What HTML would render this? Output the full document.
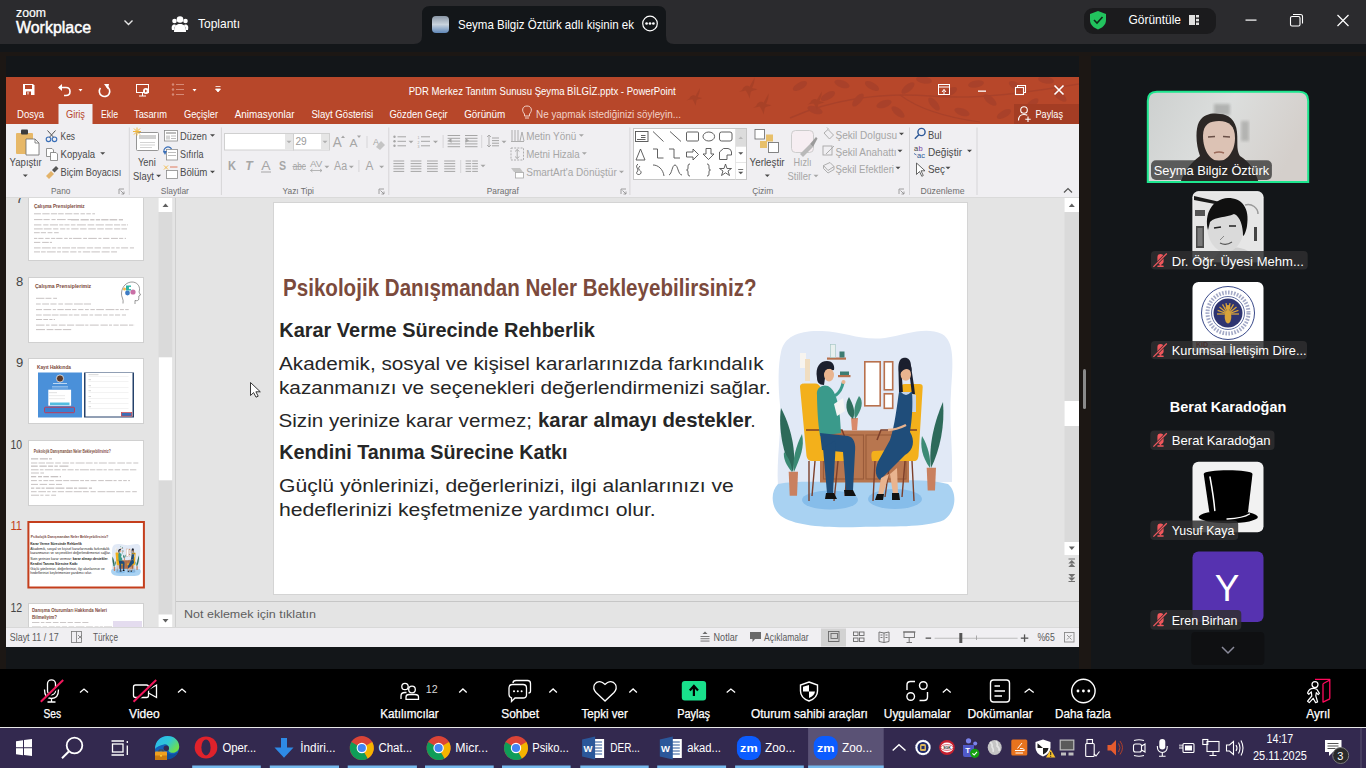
<!DOCTYPE html>
<html><head><meta charset="utf-8"><style>
html,body{margin:0;padding:0;width:1366px;height:768px;overflow:hidden;background:#131619}
svg{display:block;font-family:"Liberation Sans",sans-serif}
</style></head><body>
<svg width="1366" height="768" viewBox="0 0 1366 768">
<rect x="0" y="0" width="1366" height="768" fill="#131619" />
<rect x="0" y="0" width="1366" height="44" fill="#2b2b2e" />
<rect x="0" y="52" width="6" height="617" fill="#1c1714" />
<rect x="1079" y="52" width="12" height="617" fill="#1c1714" />
<rect x="0" y="52" width="1366" height="4" fill="#1c1714" />
<rect x="0" y="669" width="1366" height="58" fill="#000000" />
<rect x="0" y="727" width="1366" height="1" fill="#e8e8e8" />
<rect x="0" y="728" width="1366" height="40" fill="#33294f" />
<rect x="6" y="77" width="1073" height="47" fill="#b7472a" />
<rect x="6" y="124" width="1073" height="74" fill="#f0eff2" />
<rect x="6" y="198" width="1073" height="430" fill="#e4e4e4" />
<rect x="6" y="628" width="1073" height="19" fill="#f0eff2" />
<rect x="274" y="203" width="693" height="391" fill="#ffffff" />
<text x="16" y="17" font-size="13" fill="#ffffff" textLength="30" lengthAdjust="spacingAndGlyphs" stroke="#ffffff" stroke-width="0.2">zoom</text>
<text x="16" y="32.7" font-size="16" fill="#ffffff" textLength="75" lengthAdjust="spacingAndGlyphs" stroke="#ffffff" stroke-width="0.45">Workplace</text>
<path d="M124.5 20.5 L128.5 24.5 L132.5 20.5" fill="none" stroke="#e6e6e6" stroke-width="1.4" />
<g fill="#ffffff"><circle cx="180" cy="19.5" r="3.3"/><circle cx="174.5" cy="21" r="2.3"/><circle cx="185.5" cy="21" r="2.3"/><path d="M174 32 C174 26 176 24 180 24 C184 24 186 26 186 32 Z"/><path d="M172 30 C171 26 172.5 24.5 174.5 24.5 C175.5 24.5 175.8 25 176 25.3 C174.6 26.5 174.2 28 174.2 30 Z"/><path d="M188 30 C189 26 187.5 24.5 185.5 24.5 C184.5 24.5 184.2 25 184 25.3 C185.4 26.5 185.8 28 185.8 30 Z"/></g>
<text x="198" y="28.2" font-size="13" fill="#ffffff" textLength="42" lengthAdjust="spacingAndGlyphs" >Toplantı</text>
<path d="M414 44 Q422 44 422 36 L422 14 Q422 6 430 6 L658 6 Q666 6 666 14 L666 36 Q666 44 674 44 Z" fill="#131619" />
<defs><linearGradient id="thumbg" x1="0" y1="0" x2="0" y2="1"><stop offset="0" stop-color="#8a97a6"/><stop offset="0.5" stop-color="#c9d3dd"/><stop offset="1" stop-color="#5f87b8"/></linearGradient></defs>
<rect x="432" y="16" width="17" height="17" fill="url(#thumbg)" rx="4"/>
<text x="458" y="28.5" font-size="13" fill="#ffffff" textLength="176" lengthAdjust="spacingAndGlyphs" >Seyma Bilgiz Öztürk adlı kişinin ek</text>
<circle cx="650" cy="23.5" r="7.3" fill="none" stroke="#ffffff" stroke-width="1.2"/>
<g fill="#ffffff"><circle cx="646.6" cy="23.5" r="1.35"/><circle cx="650" cy="23.5" r="1.35"/><circle cx="653.4" cy="23.5" r="1.35"/></g>
<rect x="1084" y="8" width="132" height="26" fill="#1b1b1d" rx="9"/>
<path d="M1098 11 L1106 14 L1106 20 C1106 25 1102 28 1098 29.5 C1094 28 1090 25 1090 20 L1090 14 Z" fill="#22c35e" />
<path d="M1094 20 L1097 23 L1102.5 17" fill="none" stroke="#0d2a17" stroke-width="1.6" />
<text x="1128.6" y="24.3" font-size="13" fill="#ffffff" textLength="52.4" lengthAdjust="spacingAndGlyphs" >Görüntüle</text>
<rect x="1189" y="15" width="6" height="10" fill="#e0e0e0" />
<rect x="1196" y="15" width="3" height="2.5" fill="#e0e0e0" />
<rect x="1196" y="18.8" width="3" height="2.5" fill="#e0e0e0" />
<rect x="1196" y="22.5" width="3" height="2.5" fill="#e0e0e0" />
<rect x="1245.5" y="19.5" width="11" height="1.2" fill="#ffffff" />
<rect x="1290.5" y="16.5" width="9.5" height="9.5" rx="1.5" fill="none" stroke="#ffffff" stroke-width="1.1"/>
<path d="M1293 14.5 L1300.5 14.5 Q1302.5 14.5 1302.5 16.5 L1302.5 23.5" fill="none" stroke="#ffffff" stroke-width="1.1" />
<path d="M1337.5 15 L1348.5 26 M1348.5 15 L1337.5 26" fill="none" stroke="#ffffff" stroke-width="1.2" />
<defs><clipPath id="ttclip"><rect x="6" y="77" width="1073" height="47"/></clipPath></defs><g clip-path="url(#ttclip)">
<path transform="translate(690,97) scale(1.1)" d="M0 0 C2 -2 4 -2 5 -1 L9 -8 C9 -5 8 -2 7 0 L11 1 C9 2 7 2 6 3 L5 8 C4 5 3 3 2 2 L-3 3 C-1 2 0 1 0 0 Z" fill="#a33f27" opacity="0.75"/>
<path transform="translate(743,88) scale(1.3)" d="M0 0 C2 -2 4 -2 5 -1 L9 -8 C9 -5 8 -2 7 0 L11 1 C9 2 7 2 6 3 L5 8 C4 5 3 3 2 2 L-3 3 C-1 2 0 1 0 0 Z" fill="#a33f27" opacity="0.75"/>
<path transform="translate(757,104) scale(1.3)" d="M0 0 C2 -2 4 -2 5 -1 L9 -8 C9 -5 8 -2 7 0 L11 1 C9 2 7 2 6 3 L5 8 C4 5 3 3 2 2 L-3 3 C-1 2 0 1 0 0 Z" fill="#a33f27" opacity="0.75"/>
<path transform="translate(811,101) scale(1.2)" d="M0 0 C2 -2 4 -2 5 -1 L9 -8 C9 -5 8 -2 7 0 L11 1 C9 2 7 2 6 3 L5 8 C4 5 3 3 2 2 L-3 3 C-1 2 0 1 0 0 Z" fill="#a33f27" opacity="0.75"/>
<g fill="#a5402a" opacity="0.75"><path d="M790 118 C830 100 880 92 930 96 C980 100 1030 92 1079 84" stroke="#a5402a" stroke-width="1.6" fill="none"/><path d="M900 95 C920 110 950 118 980 122" stroke="#a5402a" stroke-width="1.2" fill="none"/><ellipse cx="828" cy="96" rx="8" ry="3.6" transform="rotate(-30 828 96)"/><ellipse cx="842" cy="84" rx="8" ry="3.6" transform="rotate(20 842 84)"/><ellipse cx="858" cy="100" rx="8" ry="3.6" transform="rotate(-50 858 100)"/><ellipse cx="872" cy="86" rx="8" ry="3.6" transform="rotate(30 872 86)"/><ellipse cx="884" cy="104" rx="8" ry="3.6" transform="rotate(-20 884 104)"/><ellipse cx="898" cy="112" rx="8" ry="3.6" transform="rotate(40 898 112)"/><ellipse cx="908" cy="88" rx="8" ry="3.6" transform="rotate(-40 908 88)"/><ellipse cx="924" cy="80" rx="8" ry="3.6" transform="rotate(10 924 80)"/><ellipse cx="934" cy="104" rx="8" ry="3.6" transform="rotate(50 934 104)"/><ellipse cx="950" cy="92" rx="8" ry="3.6" transform="rotate(-30 950 92)"/><ellipse cx="962" cy="112" rx="8" ry="3.6" transform="rotate(20 962 112)"/><ellipse cx="976" cy="84" rx="8" ry="3.6" transform="rotate(-10 976 84)"/><ellipse cx="990" cy="100" rx="8" ry="3.6" transform="rotate(40 990 100)"/><ellipse cx="1004" cy="114" rx="8" ry="3.6" transform="rotate(-30 1004 114)"/><ellipse cx="1016" cy="86" rx="8" ry="3.6" transform="rotate(30 1016 86)"/><ellipse cx="1032" cy="104" rx="8" ry="3.6" transform="rotate(-40 1032 104)"/><ellipse cx="1046" cy="80" rx="8" ry="3.6" transform="rotate(10 1046 80)"/><ellipse cx="1060" cy="96" rx="8" ry="3.6" transform="rotate(40 1060 96)"/><ellipse cx="1072" cy="112" rx="8" ry="3.6" transform="rotate(-20 1072 112)"/><ellipse cx="815" cy="110" rx="8" ry="3.6" transform="rotate(20 815 110)"/><ellipse cx="800" cy="86" rx="8" ry="3.6" transform="rotate(-30 800 86)"/></g>
</g>
<path d="M23 84 L33 84 L34.5 85.5 L34.5 95 L23 95 Z" fill="#ffffff" />
<rect x="25" y="85" width="7" height="4" fill="#b7472a" />
<rect x="26" y="91.5" width="5" height="3.5" fill="#b7472a" />
<rect x="27.5" y="92" width="1" height="2.5" fill="#ffffff" />
<path d="M59.5 87.5 L66 87.5 Q70 87.5 70 91.5 Q70 95.5 66 95.5 L64 95.5" fill="none" stroke="#ffffff" stroke-width="1.6" />
<path d="M58 87.5 L62 84 L62 91 Z" fill="#ffffff" />
<path d="M78.5 89 L82.5 89 L80.5 91.5 Z" fill="#ffffff" />
<path d="M106.5 86.5 A5.2 5.2 0 1 1 100.5 88" fill="none" stroke="#ffffff" stroke-width="1.6"/>
<path d="M104 84 L109 84 L108 89.5 Z" fill="#ffffff" />
<g fill="none" stroke="#ffffff" stroke-width="1"><rect x="136.5" y="84.5" width="12" height="8"/><path d="M142.5 92.5 L142.5 96 M139 96 L146 96"/></g>
<circle cx="146" cy="91" r="3" fill="#ffffff"/>
<path d="M145 89.5 L147.5 91 L145 92.5 Z" fill="#b7472a" />
<g fill="#d68a76"><circle cx="173" cy="84.5" r="1.2"/><circle cx="173" cy="89.5" r="1.2"/><circle cx="173" cy="94.5" r="1.2"/><rect x="176" y="84" width="8" height="1"/><rect x="176" y="89" width="8" height="1"/><rect x="176" y="94" width="8" height="1"/></g>
<path d="M192.5 89 L196.5 89 L194.5 91.5 Z" fill="#ffffff" />
<path d="M215.5 86.5 L220.5 86.5 M215.5 89 L220.5 89 L218 92 Z" fill="#ffffff" stroke="#ffffff" stroke-width="0.8" />
<text x="408.7" y="95" font-size="11.5" fill="#ffffff" textLength="267" lengthAdjust="spacingAndGlyphs" >PDR Merkez Tanıtım Sunusu Şeyma BİLGİZ.pptx - PowerPoint</text>
<g fill="none" stroke="#ffffff" stroke-width="1"><rect x="938.5" y="84.5" width="11" height="10"/><path d="M938.5 87 L949.5 87"/></g>
<path d="M942 92 L944 89.5 L946 92 M944 89.5 L944 94" fill="none" stroke="#ffffff" stroke-width="1" />
<rect x="978" y="90.5" width="8" height="1.3" fill="#ffffff" />
<g fill="none" stroke="#ffffff" stroke-width="1.1"><rect x="1015.5" y="87.5" width="8" height="7"/><path d="M1017.5 87.5 L1017.5 85.5 L1025.5 85.5 L1025.5 92.5 L1023.5 92.5"/></g>
<path d="M1054.5 85.5 L1063.5 94.5 M1063.5 85.5 L1054.5 94.5" fill="none" stroke="#ffffff" stroke-width="1.6" />
<rect x="58.5" y="104" width="34" height="20" fill="#f0eff2" />
<text x="17" y="117.9" font-size="11.5" fill="#ffffff" textLength="27" lengthAdjust="spacingAndGlyphs" >Dosya</text>
<text x="66" y="117.9" font-size="11.5" fill="#b7472a" textLength="19" lengthAdjust="spacingAndGlyphs" >Giriş</text>
<text x="101" y="117.9" font-size="11.5" fill="#ffffff" textLength="17" lengthAdjust="spacingAndGlyphs" >Ekle</text>
<text x="134" y="117.9" font-size="11.5" fill="#ffffff" textLength="33" lengthAdjust="spacingAndGlyphs" >Tasarım</text>
<text x="184" y="117.9" font-size="11.5" fill="#ffffff" textLength="34" lengthAdjust="spacingAndGlyphs" >Geçişler</text>
<text x="234.8" y="117.9" font-size="11.5" fill="#ffffff" textLength="59.7" lengthAdjust="spacingAndGlyphs" >Animasyonlar</text>
<text x="311.4" y="117.9" font-size="11.5" fill="#ffffff" textLength="61.8" lengthAdjust="spacingAndGlyphs" >Slayt Gösterisi</text>
<text x="389.4" y="117.9" font-size="11.5" fill="#ffffff" textLength="58.3" lengthAdjust="spacingAndGlyphs" >Gözden Geçir</text>
<text x="464.2" y="117.9" font-size="11.5" fill="#ffffff" textLength="41.1" lengthAdjust="spacingAndGlyphs" >Görünüm</text>
<g fill="none" stroke="#f2d2c8" stroke-width="1"><path d="M524.5 114 C521.5 111 522 106 527 106 C532 106 532.5 111 529.5 114 L529.5 116 L524.5 116 Z"/><path d="M525 118 L529 118"/></g>
<text x="536" y="117.9" font-size="11.5" fill="#f2d2c8" textLength="145" lengthAdjust="spacingAndGlyphs" >Ne yapmak istediğinizi söyleyin...</text>
<rect x="1014" y="104" width="65" height="20" fill="#a43d24" />
<g fill="none" stroke="#ffffff" stroke-width="1.1"><circle cx="1024" cy="110" r="3.3"/><path d="M1018.5 120.5 C1018.5 116 1021 114.5 1024 114.5 C1025.5 114.5 1026.5 114.8 1027.3 115.3"/><path d="M1028 116.5 L1028 122 M1025.3 119.3 L1030.7 119.3"/></g>
<text x="1035.5" y="118" font-size="11.5" fill="#ffffff" textLength="27.5" lengthAdjust="spacingAndGlyphs" >Paylaş</text>
<rect x="16" y="133" width="17" height="21" fill="#e7b868" rx="1"/>
<rect x="21" y="129.5" width="7" height="5" fill="#3c3c3c" rx="1"/>
<path d="M26 139 L35 139 L39 143 L39 155 L26 155 Z" fill="#ffffff" stroke="#6a6a6a" stroke-width="0.8" />
<path d="M35 139 L35 143 L39 143" fill="none" stroke="#6a6a6a" stroke-width="0.8" />
<text x="9.6" y="166.3" font-size="10.8" fill="#4a4a4a" textLength="32.2" lengthAdjust="spacingAndGlyphs" >Yapıştır</text>
<path d="M22.8 174.4 L27.8 174.4 L25.3 176.9 Z" fill="#4a4a4a" />
<g fill="none" stroke="#3a6fb8" stroke-width="1.1"><circle cx="48.5" cy="139.3" r="2.3"/><circle cx="54.5" cy="139.3" r="2.3"/></g>
<path d="M49.5 137.2 L55.5 130.5 M53.5 137.2 L47.5 130.5" fill="none" stroke="#555555" stroke-width="1" />
<text x="60.6" y="139.9" font-size="10.8" fill="#4a4a4a" textLength="14.4" lengthAdjust="spacingAndGlyphs" >Kes</text>
<g fill="#ffffff" stroke="#777777" stroke-width="0.8"><path d="M46.5 148.5 L52 148.5 L53.5 150 L53.5 156.5 L46.5 156.5 Z"/><path d="M50.5 152.5 L56 152.5 L57.5 154 L57.5 160.5 L50.5 160.5 Z"/></g>
<text x="60.6" y="157.9" font-size="10.8" fill="#4a4a4a" textLength="34.5" lengthAdjust="spacingAndGlyphs" >Kopyala</text>
<path d="M100.2 152.3 L105.2 152.3 L102.7 154.8 Z" fill="#4a4a4a" />
<path d="M46 176 L51 171 L54 174 L49 179 Z" fill="#e3b36a" />
<path d="M52 170 L56 166 L58.5 168.5 L54.5 172.5 Z" fill="#555555" />
<text x="60.6" y="176.4" font-size="10.8" fill="#4a4a4a" textLength="60.6" lengthAdjust="spacingAndGlyphs" >Biçim Boyacısı</text>
<text x="51" y="194" font-size="9.2" fill="#6e6e6e" textLength="19.4" lengthAdjust="spacingAndGlyphs" >Pano</text>
<g fill="none" stroke="#8a8a8a" stroke-width="0.8"><path d="M119 194 L119 189 L124 189"/><path d="M120.5 190.5 L124 194 M124 191.5 L124 194 L121.5 194"/></g>
<rect x="128.8" y="127.5" width="1" height="67.5" fill="#d6d5d8" />
<g><rect x="136.5" y="132.5" width="22" height="18" rx="1" fill="#ffffff" stroke="#8a8a8a" stroke-width="0.9"/><rect x="139" y="135" width="17" height="4" fill="#d0d0d0"/><path d="M140 142.5 L155 142.5 M140 145 L155 145 M140 147.5 L152 147.5" stroke="#c8c8c8" stroke-width="0.8"/></g>
<g stroke="#f0b63c" stroke-width="1"><path d="M134 128.5 L140 134.5 M140 128.5 L134 134.5 M137 127.5 L137 135.5 M133 131.5 L141 131.5"/></g>
<text x="138" y="166.3" font-size="10.8" fill="#4a4a4a" textLength="17.7" lengthAdjust="spacingAndGlyphs" >Yeni</text>
<text x="133" y="179.8" font-size="10.8" fill="#4a4a4a" textLength="21" lengthAdjust="spacingAndGlyphs" >Slayt</text>
<path d="M156.1 174.8 L161.1 174.8 L158.6 177.3 Z" fill="#4a4a4a" />
<g fill="#ffffff" stroke="#8a8a8a" stroke-width="0.8"><rect x="164.5" y="130.5" width="13" height="10.5"/></g><rect x="166" y="132" width="10" height="2" fill="#bdbdbd"/><rect x="166" y="135.5" width="4" height="4" fill="#d4d4d4"/><rect x="171" y="135.5" width="5" height="1" fill="#bdbdbd"/><rect x="171" y="138" width="5" height="1" fill="#bdbdbd"/>
<text x="180" y="139.9" font-size="10.8" fill="#4a4a4a" textLength="27" lengthAdjust="spacingAndGlyphs" >Düzen</text>
<path d="M210.0 134.3 L215.0 134.3 L212.5 136.8 Z" fill="#4a4a4a" />
<rect x="166.5" y="149.5" width="11" height="10.5" fill="#ffffff" stroke="#8a8a8a" stroke-width="0.8"/><rect x="168" y="152" width="8" height="1" fill="#bdbdbd"/><rect x="168" y="155" width="8" height="1" fill="#bdbdbd"/>
<path d="M164.5 153 A4 4 0 0 1 171.5 149" fill="none" stroke="#3a6fb8" stroke-width="1.3"/><path d="M163 151 L165 155 L167 151 Z" fill="#3a6fb8"/>
<text x="180" y="157.9" font-size="10.8" fill="#4a4a4a" textLength="23.4" lengthAdjust="spacingAndGlyphs" >Sıfırla</text>
<rect x="166.5" y="170.5" width="11" height="8" fill="#ffffff" stroke="#8a8a8a" stroke-width="0.8"/><path d="M170 167 L177.5 167" stroke="#e07a5f" stroke-width="1"/><path d="M164 165.5 L168 169.5 M168 165.5 L164 169.5" stroke="#f0b63c" stroke-width="0.9"/>
<text x="180" y="176.4" font-size="10.8" fill="#4a4a4a" textLength="27.4" lengthAdjust="spacingAndGlyphs" >Bölüm</text>
<path d="M210.0 170.8 L215.0 170.8 L212.5 173.3 Z" fill="#4a4a4a" />
<text x="160.8" y="194" font-size="9.2" fill="#6e6e6e" textLength="28.1" lengthAdjust="spacingAndGlyphs" >Slaytlar</text>
<rect x="220.9" y="127.5" width="1" height="67.5" fill="#d6d5d8" />
<rect x="224.5" y="133.5" width="69" height="16.5" fill="#ffffff" stroke="#d0d0d0" stroke-width="1"/>
<rect x="285" y="134" width="8" height="15.5" fill="#e6e6e6" />
<path d="M286.5 140.8 L291.5 140.8 L289 143.3 Z" fill="#b0b0b0" />
<rect x="293.5" y="133.5" width="36" height="16.5" fill="#ffffff" stroke="#d0d0d0" stroke-width="1"/>
<rect x="321" y="134" width="8" height="15.5" fill="#e6e6e6" />
<path d="M322.5 140.8 L327.5 140.8 L325 143.3 Z" fill="#b0b0b0" />
<text x="295.4" y="145.2" font-size="11" fill="#9a9a9a" textLength="11.3" lengthAdjust="spacingAndGlyphs" >29</text>
<text x="332.8" y="147" font-size="14" fill="#a6a6a6" textLength="9" lengthAdjust="spacingAndGlyphs" >A</text>
<path d="M341 138 L343 135.5 L345 138 Z" fill="#a6a6a6" />
<text x="349.6" y="147" font-size="10.8" fill="#a6a6a6" textLength="8" lengthAdjust="spacingAndGlyphs" >A</text>
<path d="M357 135.5 L361 135.5 L359 138 Z" fill="#a6a6a6" />
<rect x="366.5" y="136" width="1" height="12" fill="#d6d5d8" />
<text x="373" y="145" font-size="9" fill="#a6a6a6" >A</text>
<path d="M376 147 L381 141 L385 145 L380 150 Z" fill="#c4c4c4" />
<text x="228" y="170.2" font-size="12" fill="#a6a6a6" textLength="8" lengthAdjust="spacingAndGlyphs" font-weight="bold" >K</text>
<text x="245.3" y="170.2" font-size="12" fill="#a6a6a6" textLength="7.5" lengthAdjust="spacingAndGlyphs" font-weight="bold" font-style="italic">T</text>
<text x="261.2" y="170" font-size="12" fill="#a6a6a6" textLength="9.3" lengthAdjust="spacingAndGlyphs" >A</text>
<rect x="261" y="171.5" width="10" height="1" fill="#a6a6a6" />
<text x="278.9" y="170.2" font-size="12" fill="#a6a6a6" textLength="7.1" lengthAdjust="spacingAndGlyphs" font-weight="bold" >S</text>
<text x="292.7" y="170" font-size="10" fill="#a6a6a6" textLength="13.2" lengthAdjust="spacingAndGlyphs" >abc</text>
<rect x="292.5" y="166" width="13.5" height="0.9" fill="#a6a6a6" />
<text x="310" y="167" font-size="9.5" fill="#a6a6a6" textLength="12.4" lengthAdjust="spacingAndGlyphs" >AV</text>
<path d="M310.5 170.5 L322 170.5 M312.5 169 L310.5 170.5 L312.5 172 M320 169 L322 170.5 L320 172" fill="none" stroke="#a6a6a6" stroke-width="0.8" />
<path d="M324.4 165.8 L329.4 165.8 L326.9 168.3 Z" fill="#a6a6a6" />
<text x="334.1" y="170" font-size="12" fill="#a6a6a6" textLength="13" lengthAdjust="spacingAndGlyphs" >Aa</text>
<path d="M348.8 165.8 L353.8 165.8 L351.3 168.3 Z" fill="#a6a6a6" />
<rect x="358.4" y="160" width="1" height="12" fill="#d6d5d8" />
<text x="365.6" y="170.2" font-size="13" fill="#a6a6a6" textLength="7.9" lengthAdjust="spacingAndGlyphs" >A</text>
<path d="M379.1 165.8 L384.1 165.8 L381.6 168.3 Z" fill="#a6a6a6" />
<text x="282.6" y="194" font-size="9.2" fill="#6e6e6e" textLength="31.3" lengthAdjust="spacingAndGlyphs" >Yazı Tipi</text>
<g fill="none" stroke="#8a8a8a" stroke-width="0.8"><path d="M379 194 L379 189 L384 189"/><path d="M380.5 190.5 L384 194 M384 191.5 L384 194 L381.5 194"/></g>
<rect x="388.3" y="127.5" width="1" height="67.5" fill="#d6d5d8" />
<g fill="#a6a6a6"><circle cx="394.5" cy="136.8" r="1.2"/><circle cx="394.5" cy="141.3" r="1.2"/><circle cx="394.5" cy="145.8" r="1.2"/></g>
<rect x="397.5" y="136.3" width="8.5" height="1" fill="#a6a6a6" />
<rect x="397.5" y="140.8" width="8.5" height="1" fill="#a6a6a6" />
<rect x="397.5" y="145.3" width="8.5" height="1" fill="#a6a6a6" />
<path d="M408.5 140.8 L413.5 140.8 L411 143.3 Z" fill="#a6a6a6" />
<text x="417.5" y="139" font-size="3.5" fill="#a6a6a6" >1</text>
<text x="417.5" y="143.5" font-size="3.5" fill="#a6a6a6" >2</text>
<text x="417.5" y="148" font-size="3.5" fill="#a6a6a6" >3</text>
<rect x="421" y="136.3" width="9" height="1" fill="#a6a6a6" />
<rect x="421" y="140.8" width="9" height="1" fill="#a6a6a6" />
<rect x="421" y="145.3" width="9" height="1" fill="#a6a6a6" />
<path d="M433.0 140.8 L438.0 140.8 L435.5 143.3 Z" fill="#a6a6a6" />
<rect x="442.6" y="135" width="1" height="13" fill="#d6d5d8" />
<rect x="447.6" y="135.0" width="12.5" height="1" fill="#a6a6a6" />
<rect x="447.6" y="137.8" width="12.5" height="1" fill="#a6a6a6" />
<rect x="447.6" y="140.6" width="12.5" height="1" fill="#a6a6a6" />
<rect x="447.6" y="143.4" width="12.5" height="1" fill="#a6a6a6" />
<rect x="447.6" y="146.2" width="12.5" height="1" fill="#a6a6a6" />
<path d="M448 140.5 L451.5 138 L451.5 143 Z" fill="#a6a6a6" />
<rect x="465" y="135.0" width="12.5" height="1" fill="#a6a6a6" />
<rect x="465" y="137.8" width="12.5" height="1" fill="#a6a6a6" />
<rect x="465" y="140.6" width="12.5" height="1" fill="#a6a6a6" />
<rect x="465" y="143.4" width="12.5" height="1" fill="#a6a6a6" />
<rect x="465" y="146.2" width="12.5" height="1" fill="#a6a6a6" />
<path d="M469 140.5 L465.5 138 L465.5 143 Z" fill="#a6a6a6" />
<rect x="481.2" y="135" width="1" height="13" fill="#d6d5d8" />
<path d="M489 135 L489 147 M487 137 L489 135 L491 137 M487 145 L489 147 L491 145" fill="none" stroke="#a6a6a6" stroke-width="0.9" />
<rect x="492" y="137.5" width="7" height="1" fill="#a6a6a6" />
<rect x="492" y="140.1" width="7" height="1" fill="#a6a6a6" />
<rect x="492" y="142.7" width="7" height="1" fill="#a6a6a6" />
<rect x="492" y="145.3" width="7" height="1" fill="#a6a6a6" />
<path d="M501.5 140.8 L506.5 140.8 L504 143.3 Z" fill="#a6a6a6" />
<g fill="none" stroke="#a6a6a6" stroke-width="0.9"><path d="M512 130 L512 141 M515 130 L515 141 M518 130 L518 141"/><path d="M520 141 L522 132 L524 141"/><path d="M511 141.5 L524 141.5"/></g>
<text x="526.2" y="139.9" font-size="10.8" fill="#a6a6a6" textLength="50.2" lengthAdjust="spacingAndGlyphs" >Metin Yönü</text>
<path d="M578.9 134.3 L583.9 134.3 L581.4 136.8 Z" fill="#a6a6a6" />
<g fill="none" stroke="#a6a6a6" stroke-width="0.9"><rect x="511" y="148" width="12.5" height="12" stroke-dasharray="2 1.2"/><path d="M517.2 149.5 L517.2 158.5 M515 151.5 L517.2 149.5 L519.4 151.5 M515 156.5 L517.2 158.5 L519.4 156.5"/></g>
<text x="526.2" y="157.9" font-size="10.8" fill="#a6a6a6" textLength="53.5" lengthAdjust="spacingAndGlyphs" >Metni Hizala</text>
<path d="M581.9 152.3 L586.9 152.3 L584.4 154.8 Z" fill="#a6a6a6" />
<path d="M511 168 L520 168 L523 172 L514 172 Z" fill="#c4c4c4" />
<rect x="515.5" y="172.5" width="8" height="5.5" fill="#ffffff" stroke="#a6a6a6" stroke-width="0.8"/>
<text x="526.2" y="176.4" font-size="10.8" fill="#a6a6a6" textLength="90.6" lengthAdjust="spacingAndGlyphs" >SmartArt&#x27;a Dönüştür</text>
<path d="M619.0 170.8 L624.0 170.8 L621.5 173.3 Z" fill="#a6a6a6" />
<rect x="393.4" y="160.5" width="10.8" height="1" fill="#a6a6a6" />
<rect x="393.4" y="163.1" width="10.8" height="1" fill="#a6a6a6" />
<rect x="393.4" y="165.7" width="10.8" height="1" fill="#a6a6a6" />
<rect x="393.4" y="168.3" width="10.8" height="1" fill="#a6a6a6" />
<rect x="393.4" y="170.9" width="10.8" height="1" fill="#a6a6a6" />
<rect x="410.6" y="160.5" width="10.8" height="1" fill="#a6a6a6" />
<rect x="410.6" y="163.1" width="10.8" height="1" fill="#a6a6a6" />
<rect x="410.6" y="165.7" width="10.8" height="1" fill="#a6a6a6" />
<rect x="410.6" y="168.3" width="10.8" height="1" fill="#a6a6a6" />
<rect x="410.6" y="170.9" width="10.8" height="1" fill="#a6a6a6" />
<rect x="427" y="160.5" width="10.8" height="1" fill="#a6a6a6" />
<rect x="427" y="163.1" width="10.8" height="1" fill="#a6a6a6" />
<rect x="427" y="165.7" width="10.8" height="1" fill="#a6a6a6" />
<rect x="427" y="168.3" width="10.8" height="1" fill="#a6a6a6" />
<rect x="427" y="170.9" width="10.8" height="1" fill="#a6a6a6" />
<rect x="444.2" y="160.5" width="11" height="1" fill="#a6a6a6" />
<rect x="444.2" y="163.1" width="11" height="1" fill="#a6a6a6" />
<rect x="444.2" y="165.7" width="11" height="1" fill="#a6a6a6" />
<rect x="444.2" y="168.3" width="11" height="1" fill="#a6a6a6" />
<rect x="444.2" y="170.9" width="11" height="1" fill="#a6a6a6" />
<rect x="460.2" y="160" width="1" height="13" fill="#d6d5d8" />
<rect x="465.6" y="160.5" width="5.5" height="1" fill="#a6a6a6" />
<rect x="465.6" y="163.1" width="5.5" height="1" fill="#a6a6a6" />
<rect x="465.6" y="165.7" width="5.5" height="1" fill="#a6a6a6" />
<rect x="465.6" y="168.3" width="5.5" height="1" fill="#a6a6a6" />
<rect x="465.6" y="170.9" width="5.5" height="1" fill="#a6a6a6" />
<rect x="472.2" y="160.5" width="5.7" height="1" fill="#a6a6a6" />
<rect x="472.2" y="163.1" width="5.7" height="1" fill="#a6a6a6" />
<rect x="472.2" y="165.7" width="5.7" height="1" fill="#a6a6a6" />
<rect x="472.2" y="168.3" width="5.7" height="1" fill="#a6a6a6" />
<rect x="472.2" y="170.9" width="5.7" height="1" fill="#a6a6a6" />
<path d="M480.5 164.8 L485.5 164.8 L483 167.3 Z" fill="#a6a6a6" />
<text x="486.8" y="194" font-size="9.2" fill="#6e6e6e" textLength="32" lengthAdjust="spacingAndGlyphs" >Paragraf</text>
<g fill="none" stroke="#8a8a8a" stroke-width="0.8"><path d="M621 194 L621 189 L626 189"/><path d="M622.5 190.5 L626 194 M626 191.5 L626 194 L623.5 194"/></g>
<rect x="629.4" y="127.5" width="1" height="67.5" fill="#d6d5d8" />
<rect x="633.5" y="128.5" width="113" height="51" fill="#ffffff" stroke="#c6c6c6" stroke-width="1"/>
<rect x="735.5" y="129" width="10.5" height="17" fill="#dcdcdc" />
<rect x="735" y="129" width="0.8" height="50.5" fill="#e0e0e0" />
<rect x="735.5" y="146" width="10.5" height="0.8" fill="#e0e0e0" />
<rect x="735.5" y="162" width="10.5" height="0.8" fill="#e0e0e0" />
<path d="M738.5 139 L743 139 L740.75 136.5 Z" fill="#b8b8b8" />
<path d="M738.25 152.3 L743.25 152.3 L740.75 154.8 Z" fill="#555555" />
<rect x="738.2" y="169.2" width="5" height="0.8" fill="#555555" />
<path d="M738.25 171.8 L743.25 171.8 L740.75 174.3 Z" fill="#555555" />
<g fill="none" stroke="#505050" stroke-width="0.9"><rect x="635.5" y="131.5" width="12.5" height="10"/><path d="M641 135.5 L645.5 135.5 M641 137.5 L645.5 137.5 M637 139.5 L645.5 139.5"/><path d="M653 131.5 L663.5 141.5"/><path d="M670 131.5 L681 141.5"/><rect x="686.5" y="132" width="12" height="9" rx="1"/><ellipse cx="708.8" cy="136.5" rx="5.8" ry="4.5"/><rect x="719.5" y="132" width="12.5" height="9" rx="2"/><path d="M636 160 L640.5 149 L645 160 Z"/><path d="M653 149 L657.5 149 L657.5 158 L663.5 158"/><path d="M669 149 L674 149 L674 158 L680 158"/><path d="M686.5 152 L693 152 L693 149 L698.5 154.5 L693 160 L693 157 L686.5 157 Z"/><path d="M706 148.5 L711 148.5 L711 154 L714 154 L708.5 159.5 L703 154 L706 154 Z"/><path d="M719.5 159.5 L719.5 152 L723.5 148.5 L728 148.5 A4 4 0 0 1 731.5 152 L731.5 155 L727 155 L727 159.5 Z"/><path d="M638 164 C634 167 640 169 637 172 C635 174 640 176 641 173 C642 170 636 170 640 166"/><path d="M653 165 C658 165 663 169 664 176"/><path d="M669 175 C672 174 672 165 675 165 C678 165 678 175 682 175"/><path d="M690 164 C688 164 688 165 688 168 C688 170 687 170 686.5 170 C687 170 688 170 688 172 C688 175 688 176 690 176"/><path d="M707 164 C709 164 709 165 709 168 C709 170 710 170 710.5 170 C710 170 709 170 709 172 C709 175 709 176 707 176"/><path d="M725.5 164 L727 168.5 L731.5 168.5 L728 171 L729.5 175.5 L725.5 172.8 L721.5 175.5 L723 171 L719.5 168.5 L724 168.5 Z"/></g>
<rect x="755" y="129.5" width="9.5" height="9.5" fill="#ffffff" stroke="#666" stroke-width="0.8"/><rect x="766" y="134.5" width="7" height="7" fill="#e8c06a"/><rect x="760" y="141" width="7" height="7" fill="#e8c06a"/><rect x="768.5" y="142.5" width="10" height="10" fill="#ffffff" stroke="#666" stroke-width="0.8"/>
<text x="749.6" y="166.3" font-size="10.8" fill="#4a4a4a" textLength="35" lengthAdjust="spacingAndGlyphs" >Yerleştir</text>
<path d="M764.8 174.4 L769.8 174.4 L767.3 176.9 Z" fill="#4a4a4a" />
<rect x="791.5" y="130.5" width="22" height="22" rx="4" fill="#f6eef2" stroke="#c8c8c8" stroke-width="0.9"/><path d="M800 154 L810 144 L813 147 L803 157 Z" fill="#b9b9b9"/><path d="M810 144 L816 137 L817.5 138.5 L813 147 Z" fill="#9a9a9a"/>
<text x="793.4" y="166.3" font-size="10.8" fill="#a6a6a6" textLength="18.2" lengthAdjust="spacingAndGlyphs" >Hızlı</text>
<text x="787.5" y="179.8" font-size="10.8" fill="#a6a6a6" textLength="23.6" lengthAdjust="spacingAndGlyphs" >Stiller</text>
<path d="M813.5 174.8 L818.5 174.8 L816 177.3 Z" fill="#a6a6a6" />
<g fill="none" stroke="#a6a6a6" stroke-width="0.9"><path d="M824 133 L828 129.5 L833.5 135 L829.5 139 Z"/><path d="M829 129.5 L827 127.5"/><rect x="823" y="146" width="9" height="9"/><path d="M826 154 L834 146"/><path d="M823.5 165.5 L830 162.5 L834 166.5 L828 170.5 Z"/><path d="M823.5 165.5 L823.5 168.5 L828 173 L834 169.5 L834 166.5"/></g>
<text x="835.5" y="139" font-size="10.8" fill="#a6a6a6" textLength="61.5" lengthAdjust="spacingAndGlyphs" >Şekil Dolgusu</text>
<path d="M899.0 132.8 L904.0 132.8 L901.5 135.3 Z" fill="#4a4a4a" />
<text x="835.5" y="156" font-size="10.8" fill="#a6a6a6" textLength="61" lengthAdjust="spacingAndGlyphs" >Şekil Anahattı</text>
<path d="M897.5 149.8 L902.5 149.8 L900 152.3 Z" fill="#4a4a4a" />
<text x="835.5" y="173" font-size="10.8" fill="#a6a6a6" textLength="58.5" lengthAdjust="spacingAndGlyphs" >Şekil Efektleri</text>
<path d="M895.5 166.8 L900.5 166.8 L898 169.3 Z" fill="#4a4a4a" />
<text x="752.2" y="194" font-size="9.2" fill="#6e6e6e" textLength="21" lengthAdjust="spacingAndGlyphs" >Çizim</text>
<g fill="none" stroke="#8a8a8a" stroke-width="0.8"><path d="M899 194 L899 189 L904 189"/><path d="M900.5 190.5 L904 194 M904 191.5 L904 194 L901.5 194"/></g>
<rect x="909" y="127.5" width="1" height="67.5" fill="#d6d5d8" />
<g fill="none" stroke="#2b5797" stroke-width="1.4"><circle cx="921.5" cy="132" r="3.6"/><path d="M918.8 134.7 L914.8 138.7"/></g>
<text x="928" y="139" font-size="10.8" fill="#4a4a4a" textLength="13.5" lengthAdjust="spacingAndGlyphs" >Bul</text>
<text x="914" y="150.5" font-size="7.5" fill="#444444" >a</text>
<text x="918.5" y="150.5" font-size="7.5" fill="#7a3fa3" >b</text>
<text x="917" y="157.5" font-size="7.5" fill="#2b5797" >ac</text>
<path d="M914 153.5 L916.5 155" fill="none" stroke="#2b5797" stroke-width="0.8" />
<text x="928" y="156" font-size="10.8" fill="#4a4a4a" textLength="34" lengthAdjust="spacingAndGlyphs" >Değiştir</text>
<path d="M967.0 149.8 L972.0 149.8 L969.5 152.3 Z" fill="#4a4a4a" />
<path d="M916.5 163 L916.5 174.5 L919.5 171.5 L921.8 176.3 L923.3 175.5 L921 170.8 L925 170.8 Z" fill="#ffffff" stroke="#555555" stroke-width="0.9" />
<text x="928" y="173" font-size="10.8" fill="#4a4a4a" textLength="17" lengthAdjust="spacingAndGlyphs" >Seç</text>
<path d="M945.5 166.8 L950.5 166.8 L948 169.3 Z" fill="#4a4a4a" />
<text x="920.5" y="194" font-size="9.2" fill="#6e6e6e" textLength="44" lengthAdjust="spacingAndGlyphs" >Düzenleme</text>
<rect x="976.5" y="127.5" width="1" height="67.5" fill="#d6d5d8" />
<path d="M1064 192.5 L1068 188.5 L1072 192.5" fill="none" stroke="#555555" stroke-width="1.2" />
<rect x="6" y="197" width="1073" height="1" fill="#dadada" />
<defs><clipPath id="thclip"><rect x="6" y="198" width="169" height="430"/></clipPath></defs><g clip-path="url(#thclip)">
<rect x="6" y="198" width="167" height="430" fill="#e4e4e4" />
<rect x="158.5" y="198" width="14" height="430" fill="#dadada" />
<rect x="158.5" y="198" width="14" height="14" fill="#ffffff" />
<path d="M162.5 207 L168.5 207 L165.5 203.5 Z" fill="#606060" />
<rect x="158.8" y="357.3" width="13.5" height="123" fill="#ffffff" />
<rect x="158.5" y="614.5" width="14" height="13" fill="#ffffff" />
<path d="M162.5 619 L168.5 619 L165.5 622.5 Z" fill="#606060" />
<rect x="172.5" y="198" width="2.5" height="430" fill="#e4e4e4" />
<rect x="28.5" y="190.5" width="115" height="70" fill="#ffffff" stroke="#d0d0d0" stroke-width="1"/>
<text x="16" y="203" font-size="13" fill="#444444" >7</text>
<text x="33.9" y="207.5" font-size="5.2" fill="#7b4a3c" textLength="50.8" lengthAdjust="spacingAndGlyphs" font-weight="bold" >Çalışma Prensiplerimiz</text>
<rect x="34" y="213.3" width="6.9" height="1.0" fill="#7a6e6e" opacity="0.42"/>
<rect x="42.3" y="213.3" width="7.3" height="1.0" fill="#7a6e6e" opacity="0.42"/>
<rect x="50.9" y="213.3" width="6.2" height="1.0" fill="#7a6e6e" opacity="0.42"/>
<rect x="58.1" y="213.3" width="5.6" height="1.0" fill="#7a6e6e" opacity="0.42"/>
<rect x="65.1" y="213.3" width="7.2" height="1.0" fill="#7a6e6e" opacity="0.42"/>
<rect x="73.6" y="213.3" width="5.3" height="1.0" fill="#7a6e6e" opacity="0.42"/>
<rect x="80.5" y="213.3" width="4.4" height="1.0" fill="#7a6e6e" opacity="0.42"/>
<rect x="86.3" y="213.3" width="4.5" height="1.0" fill="#7a6e6e" opacity="0.42"/>
<rect x="92.3" y="213.3" width="2.7" height="1.0" fill="#7a6e6e" opacity="0.42"/>
<rect x="34" y="219.1" width="8.4" height="1.0" fill="#7a6e6e" opacity="0.42"/>
<rect x="43.5" y="219.1" width="6.2" height="1.0" fill="#7a6e6e" opacity="0.42"/>
<rect x="51.5" y="219.1" width="4.1" height="1.0" fill="#7a6e6e" opacity="0.42"/>
<rect x="57.0" y="219.1" width="8.7" height="1.0" fill="#7a6e6e" opacity="0.42"/>
<rect x="67.5" y="219.1" width="3.5" height="1.0" fill="#7a6e6e" opacity="0.42"/>
<rect x="34" y="224.4" width="7.4" height="1.0" fill="#7a6e6e" opacity="0.42"/>
<rect x="43.2" y="224.4" width="5.3" height="1.0" fill="#7a6e6e" opacity="0.42"/>
<rect x="49.9" y="224.4" width="8.1" height="1.0" fill="#7a6e6e" opacity="0.42"/>
<rect x="59.2" y="224.4" width="4.2" height="1.0" fill="#7a6e6e" opacity="0.42"/>
<rect x="64.4" y="224.4" width="5.1" height="1.0" fill="#7a6e6e" opacity="0.42"/>
<rect x="70.9" y="224.4" width="4.6" height="1.0" fill="#7a6e6e" opacity="0.42"/>
<rect x="76.9" y="224.4" width="9.0" height="1.0" fill="#7a6e6e" opacity="0.42"/>
<rect x="87.5" y="224.4" width="6.7" height="1.0" fill="#7a6e6e" opacity="0.42"/>
<rect x="95.7" y="224.4" width="8.2" height="1.0" fill="#7a6e6e" opacity="0.42"/>
<rect x="105.3" y="224.4" width="7.5" height="1.0" fill="#7a6e6e" opacity="0.42"/>
<rect x="114.0" y="224.4" width="6.1" height="1.0" fill="#7a6e6e" opacity="0.42"/>
<rect x="121.3" y="224.4" width="4.8" height="1.0" fill="#7a6e6e" opacity="0.42"/>
<rect x="127.1" y="224.4" width="0.9" height="1.0" fill="#7a6e6e" opacity="0.42"/>
<rect x="34" y="228.4" width="8.7" height="1.0" fill="#7a6e6e" opacity="0.42"/>
<rect x="43.8" y="228.4" width="7.8" height="1.0" fill="#7a6e6e" opacity="0.42"/>
<rect x="53.1" y="228.4" width="5.3" height="1.0" fill="#7a6e6e" opacity="0.42"/>
<rect x="60.1" y="228.4" width="5.2" height="1.0" fill="#7a6e6e" opacity="0.42"/>
<rect x="66.5" y="228.4" width="3.1" height="1.0" fill="#7a6e6e" opacity="0.42"/>
<rect x="71.2" y="228.4" width="7.4" height="1.0" fill="#7a6e6e" opacity="0.42"/>
<rect x="80.1" y="228.4" width="6.5" height="1.0" fill="#7a6e6e" opacity="0.42"/>
<rect x="88.2" y="228.4" width="7.6" height="1.0" fill="#7a6e6e" opacity="0.42"/>
<rect x="97.2" y="228.4" width="6.6" height="1.0" fill="#7a6e6e" opacity="0.42"/>
<rect x="105.1" y="228.4" width="7.5" height="1.0" fill="#7a6e6e" opacity="0.42"/>
<rect x="114.1" y="228.4" width="6.2" height="1.0" fill="#7a6e6e" opacity="0.42"/>
<rect x="121.4" y="228.4" width="5.6" height="1.0" fill="#7a6e6e" opacity="0.42"/>
<rect x="34" y="232.2" width="5.7" height="1.0" fill="#7a6e6e" opacity="0.42"/>
<rect x="40.8" y="232.2" width="5.2" height="1.0" fill="#7a6e6e" opacity="0.42"/>
<rect x="47.6" y="232.2" width="4.8" height="1.0" fill="#7a6e6e" opacity="0.42"/>
<rect x="54.1" y="232.2" width="4.6" height="1.0" fill="#7a6e6e" opacity="0.42"/>
<rect x="34" y="237.9" width="3.3" height="1.0" fill="#7a6e6e" opacity="0.42"/>
<rect x="38.3" y="237.9" width="5.2" height="1.0" fill="#7a6e6e" opacity="0.42"/>
<rect x="45.2" y="237.9" width="4.5" height="1.0" fill="#7a6e6e" opacity="0.42"/>
<rect x="51.1" y="237.9" width="4.1" height="1.0" fill="#7a6e6e" opacity="0.42"/>
<rect x="56.2" y="237.9" width="6.3" height="1.0" fill="#7a6e6e" opacity="0.42"/>
<rect x="64.2" y="237.9" width="3.5" height="1.0" fill="#7a6e6e" opacity="0.42"/>
<rect x="69.0" y="237.9" width="3.1" height="1.0" fill="#7a6e6e" opacity="0.42"/>
<rect x="73.1" y="237.9" width="8.4" height="1.0" fill="#7a6e6e" opacity="0.42"/>
<rect x="83.2" y="237.9" width="3.8" height="1.0" fill="#7a6e6e" opacity="0.42"/>
<rect x="88.2" y="237.9" width="8.6" height="1.0" fill="#7a6e6e" opacity="0.42"/>
<rect x="98.4" y="237.9" width="3.1" height="1.0" fill="#7a6e6e" opacity="0.42"/>
<rect x="103.1" y="237.9" width="6.2" height="1.0" fill="#7a6e6e" opacity="0.42"/>
<rect x="111.0" y="237.9" width="6.9" height="1.0" fill="#7a6e6e" opacity="0.42"/>
<rect x="119.1" y="237.9" width="4.1" height="1.0" fill="#7a6e6e" opacity="0.42"/>
<rect x="124.7" y="237.9" width="1.3" height="1.0" fill="#7a6e6e" opacity="0.42"/>
<rect x="34" y="241.9" width="6.3" height="1.0" fill="#7a6e6e" opacity="0.42"/>
<rect x="42.1" y="241.9" width="6.7" height="1.0" fill="#7a6e6e" opacity="0.42"/>
<rect x="49.8" y="241.9" width="2.2" height="1.0" fill="#7a6e6e" opacity="0.42"/>
<rect x="34" y="247.4" width="6.6" height="1.0" fill="#7a6e6e" opacity="0.42"/>
<rect x="41.9" y="247.4" width="8.8" height="1.0" fill="#7a6e6e" opacity="0.42"/>
<rect x="51.9" y="247.4" width="4.3" height="1.0" fill="#7a6e6e" opacity="0.42"/>
<rect x="57.5" y="247.4" width="3.5" height="1.0" fill="#7a6e6e" opacity="0.42"/>
<rect x="62.0" y="247.4" width="8.0" height="1.0" fill="#7a6e6e" opacity="0.42"/>
<rect x="71.2" y="247.4" width="4.8" height="1.0" fill="#7a6e6e" opacity="0.42"/>
<rect x="77.2" y="247.4" width="8.1" height="1.0" fill="#7a6e6e" opacity="0.42"/>
<rect x="86.8" y="247.4" width="6.3" height="1.0" fill="#7a6e6e" opacity="0.42"/>
<rect x="94.5" y="247.4" width="6.5" height="1.0" fill="#7a6e6e" opacity="0.42"/>
<rect x="102.6" y="247.4" width="7.4" height="1.0" fill="#7a6e6e" opacity="0.42"/>
<rect x="111.3" y="247.4" width="3.3" height="1.0" fill="#7a6e6e" opacity="0.42"/>
<rect x="116.1" y="247.4" width="3.6" height="1.0" fill="#7a6e6e" opacity="0.42"/>
<rect x="121.1" y="247.4" width="7.0" height="1.0" fill="#7a6e6e" opacity="0.42"/>
<rect x="129.9" y="247.4" width="4.1" height="1.0" fill="#7a6e6e" opacity="0.42"/>
<rect x="34" y="251.4" width="6.0" height="1.0" fill="#7a6e6e" opacity="0.42"/>
<rect x="41.0" y="251.4" width="4.7" height="1.0" fill="#7a6e6e" opacity="0.42"/>
<rect x="46.9" y="251.4" width="8.8" height="1.0" fill="#7a6e6e" opacity="0.42"/>
<rect x="57.0" y="251.4" width="3.9" height="1.0" fill="#7a6e6e" opacity="0.42"/>
<rect x="62.2" y="251.4" width="6.5" height="1.0" fill="#7a6e6e" opacity="0.42"/>
<rect x="70.2" y="251.4" width="6.3" height="1.0" fill="#7a6e6e" opacity="0.42"/>
<rect x="78.1" y="251.4" width="3.1" height="1.0" fill="#7a6e6e" opacity="0.42"/>
<rect x="82.8" y="251.4" width="7.4" height="1.0" fill="#7a6e6e" opacity="0.42"/>
<rect x="91.4" y="251.4" width="8.5" height="1.0" fill="#7a6e6e" opacity="0.42"/>
<rect x="101.6" y="251.4" width="8.0" height="1.0" fill="#7a6e6e" opacity="0.42"/>
<rect x="111.1" y="251.4" width="5.9" height="1.0" fill="#7a6e6e" opacity="0.42"/>
<rect x="71" y="219.1" width="8.0" height="1.3" fill="#7a6e6e" opacity="0.42"/>
<rect x="80.6" y="219.1" width="8.2" height="1.3" fill="#7a6e6e" opacity="0.42"/>
<rect x="90.2" y="219.1" width="4.3" height="1.3" fill="#7a6e6e" opacity="0.42"/>
<rect x="95.8" y="219.1" width="4.3" height="1.3" fill="#7a6e6e" opacity="0.42"/>
<rect x="101.2" y="219.1" width="7.3" height="1.3" fill="#7a6e6e" opacity="0.42"/>
<rect x="109.6" y="219.1" width="7.6" height="1.3" fill="#7a6e6e" opacity="0.42"/>
<rect x="118.8" y="219.1" width="4.2" height="1.3" fill="#7a6e6e" opacity="0.42"/>
<rect x="28.5" y="277.5" width="115" height="65" fill="#ffffff" stroke="#d0d0d0" stroke-width="1"/>
<text x="16" y="286" font-size="13" fill="#444444" >8</text>
<text x="34.9" y="288" font-size="5.2" fill="#7b4a3c" textLength="56.3" lengthAdjust="spacingAndGlyphs" font-weight="bold" >Çalışma Prensiplerimiz</text>
<rect x="36" y="297.8" width="8.4" height="1.0" fill="#7a6e6e" opacity="0.42"/>
<rect x="45.5" y="297.8" width="5.9" height="1.0" fill="#7a6e6e" opacity="0.42"/>
<rect x="53.2" y="297.8" width="3.8" height="1.0" fill="#7a6e6e" opacity="0.42"/>
<rect x="36" y="303.5" width="4.7" height="1.0" fill="#7a6e6e" opacity="0.42"/>
<rect x="42.2" y="303.5" width="6.8" height="1.0" fill="#7a6e6e" opacity="0.42"/>
<rect x="50.4" y="303.5" width="6.1" height="1.0" fill="#7a6e6e" opacity="0.42"/>
<rect x="58.3" y="303.5" width="4.7" height="1.0" fill="#7a6e6e" opacity="0.42"/>
<rect x="64.7" y="303.5" width="7.9" height="1.0" fill="#7a6e6e" opacity="0.42"/>
<rect x="74.0" y="303.5" width="8.8" height="1.0" fill="#7a6e6e" opacity="0.42"/>
<rect x="83.8" y="303.5" width="7.2" height="1.0" fill="#7a6e6e" opacity="0.42"/>
<rect x="36" y="309.1" width="6.0" height="1.0" fill="#7a6e6e" opacity="0.42"/>
<rect x="43.5" y="309.1" width="7.7" height="1.0" fill="#7a6e6e" opacity="0.42"/>
<rect x="52.8" y="309.1" width="3.1" height="1.0" fill="#7a6e6e" opacity="0.42"/>
<rect x="57.4" y="309.1" width="6.3" height="1.0" fill="#7a6e6e" opacity="0.42"/>
<rect x="64.9" y="309.1" width="6.1" height="1.0" fill="#7a6e6e" opacity="0.42"/>
<rect x="72.1" y="309.1" width="4.4" height="1.0" fill="#7a6e6e" opacity="0.42"/>
<rect x="78.2" y="309.1" width="5.2" height="1.0" fill="#7a6e6e" opacity="0.42"/>
<rect x="85.0" y="309.1" width="3.8" height="1.0" fill="#7a6e6e" opacity="0.42"/>
<rect x="90.4" y="309.1" width="4.4" height="1.0" fill="#7a6e6e" opacity="0.42"/>
<rect x="96.2" y="309.1" width="7.7" height="1.0" fill="#7a6e6e" opacity="0.42"/>
<rect x="105.6" y="309.1" width="8.8" height="1.0" fill="#7a6e6e" opacity="0.42"/>
<rect x="115.5" y="309.1" width="3.2" height="1.0" fill="#7a6e6e" opacity="0.42"/>
<rect x="120.0" y="309.1" width="3.9" height="1.0" fill="#7a6e6e" opacity="0.42"/>
<rect x="125.2" y="309.1" width="3.5" height="1.0" fill="#7a6e6e" opacity="0.42"/>
<rect x="36" y="314.5" width="5.7" height="1.0" fill="#7a6e6e" opacity="0.42"/>
<rect x="43.1" y="314.5" width="7.7" height="1.0" fill="#7a6e6e" opacity="0.42"/>
<rect x="51.8" y="314.5" width="6.7" height="1.0" fill="#7a6e6e" opacity="0.42"/>
<rect x="59.7" y="314.5" width="7.8" height="1.0" fill="#7a6e6e" opacity="0.42"/>
<rect x="68.8" y="314.5" width="3.8" height="1.0" fill="#7a6e6e" opacity="0.42"/>
<rect x="73.8" y="314.5" width="5.5" height="1.0" fill="#7a6e6e" opacity="0.42"/>
<rect x="81.1" y="314.5" width="6.8" height="1.0" fill="#7a6e6e" opacity="0.42"/>
<rect x="89.5" y="314.5" width="3.6" height="1.0" fill="#7a6e6e" opacity="0.42"/>
<rect x="94.7" y="314.5" width="7.1" height="1.0" fill="#7a6e6e" opacity="0.42"/>
<rect x="103.1" y="314.5" width="4.5" height="1.0" fill="#7a6e6e" opacity="0.42"/>
<rect x="109.2" y="314.5" width="4.5" height="1.0" fill="#7a6e6e" opacity="0.42"/>
<rect x="115.0" y="314.5" width="5.1" height="1.0" fill="#7a6e6e" opacity="0.42"/>
<rect x="121.9" y="314.5" width="4.1" height="1.0" fill="#7a6e6e" opacity="0.42"/>
<rect x="36" y="319.0" width="6.1" height="1.0" fill="#7a6e6e" opacity="0.42"/>
<rect x="43.3" y="319.0" width="4.8" height="1.0" fill="#7a6e6e" opacity="0.42"/>
<rect x="49.3" y="319.0" width="3.2" height="1.0" fill="#7a6e6e" opacity="0.42"/>
<rect x="53.7" y="319.0" width="1.3" height="1.0" fill="#7a6e6e" opacity="0.42"/>
<rect x="36" y="324.6" width="8.5" height="1.0" fill="#7a6e6e" opacity="0.42"/>
<rect x="46.0" y="324.6" width="3.5" height="1.0" fill="#7a6e6e" opacity="0.42"/>
<rect x="51.2" y="324.6" width="6.1" height="1.0" fill="#7a6e6e" opacity="0.42"/>
<rect x="58.9" y="324.6" width="6.7" height="1.0" fill="#7a6e6e" opacity="0.42"/>
<rect x="67.0" y="324.6" width="7.1" height="1.0" fill="#7a6e6e" opacity="0.42"/>
<rect x="75.6" y="324.6" width="8.6" height="1.0" fill="#7a6e6e" opacity="0.42"/>
<rect x="85.2" y="324.6" width="3.2" height="1.0" fill="#7a6e6e" opacity="0.42"/>
<rect x="89.8" y="324.6" width="8.9" height="1.0" fill="#7a6e6e" opacity="0.42"/>
<rect x="100.5" y="324.6" width="7.3" height="1.0" fill="#7a6e6e" opacity="0.42"/>
<rect x="109.0" y="324.6" width="3.0" height="1.0" fill="#7a6e6e" opacity="0.42"/>
<rect x="113.4" y="324.6" width="5.3" height="1.0" fill="#7a6e6e" opacity="0.42"/>
<rect x="120.0" y="324.6" width="7.7" height="1.0" fill="#7a6e6e" opacity="0.42"/>
<rect x="129.0" y="324.6" width="4.4" height="1.0" fill="#7a6e6e" opacity="0.42"/>
<rect x="134.9" y="324.6" width="0.1" height="1.0" fill="#7a6e6e" opacity="0.42"/>
<rect x="36" y="329.1" width="9.0" height="1.0" fill="#7a6e6e" opacity="0.42"/>
<rect x="46.6" y="329.1" width="6.8" height="1.0" fill="#7a6e6e" opacity="0.42"/>
<rect x="54.6" y="329.1" width="7.1" height="1.0" fill="#7a6e6e" opacity="0.42"/>
<rect x="62.8" y="329.1" width="8.4" height="1.0" fill="#7a6e6e" opacity="0.42"/>
<g fill="none" stroke="#555" stroke-width="0.6"><path d="M123 303.5 C124 299 121 297 121.5 293 C122 286 127 282 132 282 C137 282 140 286 139.5 290 L139 292 L140.5 295 L138.8 296 L138.8 299 C138.8 300.5 137 301 135 300.5 L135 304"/></g><rect x="126" y="285.5" width="5" height="5" fill="#2bb3a3"/><circle cx="133" cy="292" r="2.6" fill="#c970a6"/><circle cx="127.5" cy="293" r="2.4" fill="#3e7bc4"/><circle cx="124.5" cy="289" r="1.5" fill="#f2b94a"/><circle cx="130" cy="288" r="1.2" fill="#ffffff"/>
<rect x="28.5" y="358.5" width="115" height="65" fill="#ffffff" stroke="#d0d0d0" stroke-width="1"/>
<text x="16" y="367" font-size="13" fill="#444444" >9</text>
<text x="37" y="369" font-size="5" fill="#7b4a3c" textLength="34" lengthAdjust="spacingAndGlyphs" font-weight="bold" >Kayıt Hakkında</text>
<rect x="38" y="372.5" width="44" height="45" fill="#4a90d9" />
<circle cx="60" cy="378.5" r="3.6" fill="#5a3a2a" stroke="#fff" stroke-width="0.7"/>
<rect x="53" y="383" width="14" height="1" fill="#bcd8f3" />
<rect x="52" y="386" width="16" height="0.7" fill="#a9cdf0" />
<rect x="52" y="387.6" width="16" height="0.7" fill="#a9cdf0" />
<rect x="48.3" y="389.7" width="22.8" height="16" fill="#ffffff" />
<rect x="50" y="402.5" width="19.5" height="2.6" fill="#52bde0" />
<rect x="49" y="392.5" width="8" height="0.6" fill="#cccccc" />
<rect x="49" y="395.5" width="16" height="0.6" fill="#dddddd" />
<rect x="49" y="398.5" width="16" height="0.6" fill="#dddddd" />
<rect x="44.5" y="407.2" width="30" height="5.5" rx="1" fill="#3b7fd0" stroke="#d0334a" stroke-width="0.9"/>
<rect x="84" y="372.5" width="50" height="45" fill="#24416a" />
<rect x="85.5" y="373" width="47" height="43.5" fill="#ffffff" />
<rect x="88.5" y="374.5" width="10" height="0.6" fill="#bbbbbb" />
<rect x="88.5" y="376.5" width="40" height="0.5" fill="#e6e6e6" />
<rect x="88.5" y="379.5" width="2.5" height="0.6" fill="#bbbbbb" />
<rect x="88.5" y="381.5" width="40" height="0.5" fill="#e6e6e6" />
<rect x="88.5" y="385.5" width="2.5" height="0.6" fill="#bbbbbb" />
<rect x="88.5" y="387.5" width="40" height="0.5" fill="#e6e6e6" />
<rect x="88.5" y="390.5" width="2.5" height="0.6" fill="#bbbbbb" />
<rect x="88.5" y="392.5" width="40" height="0.5" fill="#e6e6e6" />
<rect x="88.5" y="396" width="2.5" height="0.6" fill="#bbbbbb" />
<rect x="88.5" y="398" width="40" height="0.5" fill="#e6e6e6" />
<rect x="88.5" y="401.5" width="2.5" height="0.6" fill="#bbbbbb" />
<rect x="88.5" y="403.5" width="40" height="0.5" fill="#e6e6e6" />
<rect x="88.5" y="406.5" width="2.5" height="0.6" fill="#bbbbbb" />
<rect x="88.5" y="408.5" width="40" height="0.5" fill="#e6e6e6" />
<rect x="121.3" y="412.6" width="10.5" height="3.5" fill="#3a6fb8" stroke="#d33" stroke-width="0.6"/>
<rect x="28.5" y="440.5" width="115" height="65" fill="#ffffff" stroke="#d0d0d0" stroke-width="1"/>
<text x="10.4" y="449" font-size="13" fill="#444444" textLength="11.6" lengthAdjust="spacingAndGlyphs" >10</text>
<text x="33.75" y="453.2" font-size="4.6" fill="#7b4a3c" textLength="77" lengthAdjust="spacingAndGlyphs" font-weight="bold" >Psikolojik Danışmandan Neler Bekleyebilirsiniz?</text>
<rect x="31" y="458.2" width="7.2" height="1.3" fill="#7a6e6e" opacity="0.42"/>
<rect x="39.8" y="458.2" width="8.1" height="1.3" fill="#7a6e6e" opacity="0.42"/>
<rect x="49.0" y="458.2" width="3.0" height="1.3" fill="#7a6e6e" opacity="0.42"/>
<rect x="31" y="462.5" width="6.3" height="1.0" fill="#7a6e6e" opacity="0.42"/>
<rect x="38.5" y="462.5" width="6.5" height="1.0" fill="#7a6e6e" opacity="0.42"/>
<rect x="46.1" y="462.5" width="7.6" height="1.0" fill="#7a6e6e" opacity="0.42"/>
<rect x="55.2" y="462.5" width="5.6" height="1.0" fill="#7a6e6e" opacity="0.42"/>
<rect x="62.5" y="462.5" width="6.4" height="1.0" fill="#7a6e6e" opacity="0.42"/>
<rect x="70.2" y="462.5" width="4.0" height="1.0" fill="#7a6e6e" opacity="0.42"/>
<rect x="75.6" y="462.5" width="9.0" height="1.0" fill="#7a6e6e" opacity="0.42"/>
<rect x="85.8" y="462.5" width="6.8" height="1.0" fill="#7a6e6e" opacity="0.42"/>
<rect x="94.0" y="462.5" width="3.6" height="1.0" fill="#7a6e6e" opacity="0.42"/>
<rect x="98.9" y="462.5" width="7.9" height="1.0" fill="#7a6e6e" opacity="0.42"/>
<rect x="108.4" y="462.5" width="7.1" height="1.0" fill="#7a6e6e" opacity="0.42"/>
<rect x="117.3" y="462.5" width="7.7" height="1.0" fill="#7a6e6e" opacity="0.42"/>
<rect x="126.3" y="462.5" width="5.3" height="1.0" fill="#7a6e6e" opacity="0.42"/>
<rect x="133.3" y="462.5" width="5.0" height="1.0" fill="#7a6e6e" opacity="0.42"/>
<rect x="31" y="465.5" width="6.7" height="1.3" fill="#7a6e6e" opacity="0.42"/>
<rect x="39.4" y="465.5" width="7.3" height="1.3" fill="#7a6e6e" opacity="0.42"/>
<rect x="48.1" y="465.5" width="5.0" height="1.3" fill="#7a6e6e" opacity="0.42"/>
<rect x="54.4" y="465.5" width="3.4" height="1.3" fill="#7a6e6e" opacity="0.42"/>
<rect x="59.4" y="465.5" width="9.0" height="1.3" fill="#7a6e6e" opacity="0.42"/>
<rect x="31" y="469.3" width="7.6" height="1.0" fill="#7a6e6e" opacity="0.42"/>
<rect x="39.9" y="469.3" width="3.6" height="1.0" fill="#7a6e6e" opacity="0.42"/>
<rect x="44.8" y="469.3" width="8.4" height="1.0" fill="#7a6e6e" opacity="0.42"/>
<rect x="54.3" y="469.3" width="6.2" height="1.0" fill="#7a6e6e" opacity="0.42"/>
<rect x="62.0" y="469.3" width="4.2" height="1.0" fill="#7a6e6e" opacity="0.42"/>
<rect x="67.5" y="469.3" width="6.1" height="1.0" fill="#7a6e6e" opacity="0.42"/>
<rect x="75.0" y="469.3" width="3.8" height="1.0" fill="#7a6e6e" opacity="0.42"/>
<rect x="79.9" y="469.3" width="9.0" height="1.0" fill="#7a6e6e" opacity="0.42"/>
<rect x="89.9" y="469.3" width="5.4" height="1.0" fill="#7a6e6e" opacity="0.42"/>
<rect x="96.4" y="469.3" width="6.1" height="1.0" fill="#7a6e6e" opacity="0.42"/>
<rect x="103.5" y="469.3" width="3.3" height="1.0" fill="#7a6e6e" opacity="0.42"/>
<rect x="108.3" y="469.3" width="5.0" height="1.0" fill="#7a6e6e" opacity="0.42"/>
<rect x="114.6" y="469.3" width="5.5" height="1.0" fill="#7a6e6e" opacity="0.42"/>
<rect x="121.8" y="469.3" width="6.9" height="1.0" fill="#7a6e6e" opacity="0.42"/>
<rect x="130.0" y="469.3" width="6.3" height="1.0" fill="#7a6e6e" opacity="0.42"/>
<rect x="31" y="472.5" width="7.9" height="1.0" fill="#7a6e6e" opacity="0.42"/>
<rect x="40.4" y="472.5" width="3.6" height="1.0" fill="#7a6e6e" opacity="0.42"/>
<rect x="31" y="476.0" width="5.2" height="1.3" fill="#7a6e6e" opacity="0.42"/>
<rect x="38.0" y="476.0" width="4.0" height="1.3" fill="#7a6e6e" opacity="0.42"/>
<rect x="43.3" y="476.0" width="5.6" height="1.3" fill="#7a6e6e" opacity="0.42"/>
<rect x="50.6" y="476.0" width="7.6" height="1.3" fill="#7a6e6e" opacity="0.42"/>
<rect x="59.7" y="476.0" width="1.3" height="1.3" fill="#7a6e6e" opacity="0.42"/>
<rect x="31" y="480.1" width="5.9" height="1.0" fill="#7a6e6e" opacity="0.42"/>
<rect x="38.6" y="480.1" width="3.3" height="1.0" fill="#7a6e6e" opacity="0.42"/>
<rect x="43.4" y="480.1" width="4.8" height="1.0" fill="#7a6e6e" opacity="0.42"/>
<rect x="49.2" y="480.1" width="4.7" height="1.0" fill="#7a6e6e" opacity="0.42"/>
<rect x="55.5" y="480.1" width="6.6" height="1.0" fill="#7a6e6e" opacity="0.42"/>
<rect x="63.2" y="480.1" width="6.0" height="1.0" fill="#7a6e6e" opacity="0.42"/>
<rect x="70.3" y="480.1" width="8.6" height="1.0" fill="#7a6e6e" opacity="0.42"/>
<rect x="80.2" y="480.1" width="3.8" height="1.0" fill="#7a6e6e" opacity="0.42"/>
<rect x="85.1" y="480.1" width="4.0" height="1.0" fill="#7a6e6e" opacity="0.42"/>
<rect x="90.6" y="480.1" width="5.9" height="1.0" fill="#7a6e6e" opacity="0.42"/>
<rect x="98.2" y="480.1" width="5.6" height="1.0" fill="#7a6e6e" opacity="0.42"/>
<rect x="105.2" y="480.1" width="7.2" height="1.0" fill="#7a6e6e" opacity="0.42"/>
<rect x="113.5" y="480.1" width="3.1" height="1.0" fill="#7a6e6e" opacity="0.42"/>
<rect x="118.3" y="480.1" width="3.6" height="1.0" fill="#7a6e6e" opacity="0.42"/>
<rect x="123.2" y="480.1" width="3.6" height="1.0" fill="#7a6e6e" opacity="0.42"/>
<rect x="128.1" y="480.1" width="1.9" height="1.0" fill="#7a6e6e" opacity="0.42"/>
<rect x="31" y="483.9" width="7.0" height="1.0" fill="#7a6e6e" opacity="0.42"/>
<rect x="39.6" y="483.9" width="7.5" height="1.0" fill="#7a6e6e" opacity="0.42"/>
<rect x="48.9" y="483.9" width="5.8" height="1.0" fill="#7a6e6e" opacity="0.42"/>
<rect x="56.0" y="483.9" width="6.0" height="1.0" fill="#7a6e6e" opacity="0.42"/>
<rect x="31" y="487.5" width="3.3" height="1.3" fill="#7a6e6e" opacity="0.42"/>
<rect x="35.8" y="487.5" width="4.6" height="1.3" fill="#7a6e6e" opacity="0.42"/>
<rect x="41.5" y="487.5" width="3.1" height="1.3" fill="#7a6e6e" opacity="0.42"/>
<rect x="45.9" y="487.5" width="8.4" height="1.3" fill="#7a6e6e" opacity="0.42"/>
<rect x="55.5" y="487.5" width="8.9" height="1.3" fill="#7a6e6e" opacity="0.42"/>
<rect x="66.1" y="487.5" width="6.8" height="1.3" fill="#7a6e6e" opacity="0.42"/>
<rect x="74.0" y="487.5" width="3.2" height="1.3" fill="#7a6e6e" opacity="0.42"/>
<rect x="78.5" y="487.5" width="8.8" height="1.3" fill="#7a6e6e" opacity="0.42"/>
<rect x="88.9" y="487.5" width="3.1" height="1.3" fill="#7a6e6e" opacity="0.42"/>
<rect x="31" y="491.2" width="5.6" height="1.0" fill="#7a6e6e" opacity="0.42"/>
<rect x="38.3" y="491.2" width="7.7" height="1.0" fill="#7a6e6e" opacity="0.42"/>
<rect x="47.2" y="491.2" width="3.4" height="1.0" fill="#7a6e6e" opacity="0.42"/>
<rect x="52.1" y="491.2" width="4.3" height="1.0" fill="#7a6e6e" opacity="0.42"/>
<rect x="57.8" y="491.2" width="6.2" height="1.0" fill="#7a6e6e" opacity="0.42"/>
<rect x="65.4" y="491.2" width="7.1" height="1.0" fill="#7a6e6e" opacity="0.42"/>
<rect x="73.7" y="491.2" width="8.1" height="1.0" fill="#7a6e6e" opacity="0.42"/>
<rect x="82.9" y="491.2" width="5.9" height="1.0" fill="#7a6e6e" opacity="0.42"/>
<rect x="90.5" y="491.2" width="5.3" height="1.0" fill="#7a6e6e" opacity="0.42"/>
<rect x="97.6" y="491.2" width="7.8" height="1.0" fill="#7a6e6e" opacity="0.42"/>
<rect x="106.4" y="491.2" width="8.5" height="1.0" fill="#7a6e6e" opacity="0.42"/>
<rect x="116.2" y="491.2" width="7.8" height="1.0" fill="#7a6e6e" opacity="0.42"/>
<rect x="125.3" y="491.2" width="5.1" height="1.0" fill="#7a6e6e" opacity="0.42"/>
<rect x="132.2" y="491.2" width="4.6" height="1.0" fill="#7a6e6e" opacity="0.42"/>
<rect x="31" y="494.7" width="8.1" height="1.0" fill="#7a6e6e" opacity="0.42"/>
<rect x="40.3" y="494.7" width="3.2" height="1.0" fill="#7a6e6e" opacity="0.42"/>
<rect x="45.2" y="494.7" width="4.3" height="1.0" fill="#7a6e6e" opacity="0.42"/>
<rect x="51.2" y="494.7" width="4.8" height="1.0" fill="#7a6e6e" opacity="0.42"/>
<rect x="27.4" y="521" width="117.5" height="67.5" fill="#c43e1c" />
<rect x="29.4" y="523" width="113.5" height="63.5" fill="#ffffff" />
<text x="10.4" y="530" font-size="13" fill="#c43e1c" textLength="11.7" lengthAdjust="spacingAndGlyphs" >11</text>
<use href="#slidecontent" transform="translate(-15.476,489.753) scale(0.16378)"/>
<rect x="28.5" y="603.5" width="115" height="40" fill="#ffffff" stroke="#d0d0d0" stroke-width="1"/>
<text x="10.4" y="612" font-size="13" fill="#444444" textLength="11.7" lengthAdjust="spacingAndGlyphs" >12</text>
<text x="32" y="612" font-size="5.5" fill="#7b4a3c" textLength="75" lengthAdjust="spacingAndGlyphs" font-weight="bold" >Danışma Oturumları Hakkında Neleri</text>
<text x="32" y="618.5" font-size="5.5" fill="#7b4a3c" textLength="25" lengthAdjust="spacingAndGlyphs" font-weight="bold" >Bilmeliyim?</text>
<rect x="32" y="622.0" width="7.4" height="0.9" fill="#7a6e6e" opacity="0.42"/>
<rect x="40.9" y="622.0" width="3.5" height="0.9" fill="#7a6e6e" opacity="0.42"/>
<rect x="45.7" y="622.0" width="5.5" height="0.9" fill="#7a6e6e" opacity="0.42"/>
<rect x="52.9" y="622.0" width="5.6" height="0.9" fill="#7a6e6e" opacity="0.42"/>
<rect x="60.0" y="622.0" width="6.1" height="0.9" fill="#7a6e6e" opacity="0.42"/>
<rect x="67.6" y="622.0" width="5.3" height="0.9" fill="#7a6e6e" opacity="0.42"/>
<rect x="74.5" y="622.0" width="6.2" height="0.9" fill="#7a6e6e" opacity="0.42"/>
<rect x="82.3" y="622.0" width="6.1" height="0.9" fill="#7a6e6e" opacity="0.42"/>
<rect x="32" y="626.5" width="8.9" height="0.9" fill="#7a6e6e" opacity="0.42"/>
<rect x="42.6" y="626.5" width="4.4" height="0.9" fill="#7a6e6e" opacity="0.42"/>
<rect x="48.8" y="626.5" width="5.9" height="0.9" fill="#7a6e6e" opacity="0.42"/>
<rect x="55.9" y="626.5" width="4.4" height="0.9" fill="#7a6e6e" opacity="0.42"/>
<rect x="61.8" y="626.5" width="5.2" height="0.9" fill="#7a6e6e" opacity="0.42"/>
<rect x="68.6" y="626.5" width="5.6" height="0.9" fill="#7a6e6e" opacity="0.42"/>
<rect x="75.8" y="626.5" width="8.6" height="0.9" fill="#7a6e6e" opacity="0.42"/>
<rect x="86.1" y="626.5" width="6.8" height="0.9" fill="#7a6e6e" opacity="0.42"/>
<rect x="94.6" y="626.5" width="4.0" height="0.9" fill="#7a6e6e" opacity="0.42"/>
<rect x="99.7" y="626.5" width="3.2" height="0.9" fill="#7a6e6e" opacity="0.42"/>
<rect x="104.0" y="626.5" width="8.0" height="0.9" fill="#7a6e6e" opacity="0.42"/>
<rect x="113" y="621" width="29" height="8" fill="#e4dcef" />
</g>
<rect x="1064.5" y="198" width="14.5" height="344" fill="#dadada" />
<rect x="1064.5" y="198" width="14.5" height="14" fill="#ffffff" />
<path d="M1068.8 207 L1074.8 207 L1071.8 203.5 Z" fill="#606060" />
<rect x="1064.5" y="401" width="14.5" height="25" fill="#ffffff" />
<rect x="1064.5" y="542" width="14.5" height="13" fill="#ffffff" />
<path d="M1068.8 546.5 L1074.8 546.5 L1071.8 550 Z" fill="#606060" />
<rect x="1068.5" y="558.5" width="6.5" height="1" fill="#707070" />
<path d="M1068.3 563.5 L1071.8 560 L1075.3 563.5 Z M1068.3 567 L1071.8 563.5 L1075.3 567 Z" fill="#707070" />
<path d="M1068.3 574 L1071.8 577.5 L1075.3 574 Z M1068.3 577.5 L1071.8 581 L1075.3 577.5 Z" fill="#707070" />
<rect x="1068.5" y="581" width="6.5" height="1" fill="#707070" />
<rect x="175" y="601" width="904" height="1" fill="#c6c6c6" />
<text x="184" y="618.3" font-size="11.8" fill="#5e5e5e" textLength="132" lengthAdjust="spacingAndGlyphs" >Not eklemek için tıklatın</text>
<rect x="175" y="198" width="1" height="430" fill="#cfcfcf" />
<rect x="6" y="627" width="1073" height="1" fill="#d8d8d8" />
<text x="9.8" y="641.4" font-size="10.5" fill="#5a5a5a" textLength="48.8" lengthAdjust="spacingAndGlyphs" >Slayt 11 / 17</text>
<g fill="none" stroke="#777" stroke-width="0.8"><rect x="71.5" y="631.5" width="10" height="11"/><path d="M76.5 631.5 L76.5 642.5"/><path d="M78 635 L82 639 M82 635 L78 639"/></g>
<text x="92.9" y="641.4" font-size="10.5" fill="#5a5a5a" textLength="25.1" lengthAdjust="spacingAndGlyphs" >Türkçe</text>
<g fill="#6a6a6a"><path d="M702.5 634 L705 631.5 L707.5 634 Z"/><rect x="700.5" y="636" width="9" height="0.9"/><rect x="700.5" y="638.3" width="9" height="0.9"/><rect x="700.5" y="640.6" width="9" height="0.9"/></g>
<text x="713.6" y="641.4" font-size="10.5" fill="#5a5a5a" textLength="24.1" lengthAdjust="spacingAndGlyphs" >Notlar</text>
<path d="M750 632 L761 632 L761 639 L755 639 L752.5 642 L752.5 639 L750 639 Z" fill="#6a6a6a" />
<text x="764" y="641.4" font-size="10.5" fill="#5a5a5a" textLength="44.5" lengthAdjust="spacingAndGlyphs" >Açıklamalar</text>
<rect x="821" y="628.5" width="25" height="18" fill="#d2d2d2" />
<g fill="none" stroke="#6a6a6a" stroke-width="0.9"><rect x="828.5" y="631.5" width="10.5" height="10"/><rect x="831" y="633.5" width="6.5" height="5"/><path d="M828.5 641.5 L839 641.5"/><rect x="853.5" y="632" width="4.5" height="3.5"/><rect x="859.5" y="632" width="4.5" height="3.5"/><rect x="853.5" y="638" width="4.5" height="3.5"/><rect x="859.5" y="638" width="4.5" height="3.5"/><path d="M879 632 L884 633 L889 632 L889 641.5 L884 642.5 L879 641.5 Z M884 633 L884 642.5"/><path d="M880.5 635 L882.5 635 M880.5 637.5 L882.5 637.5 M885.5 635 L887.5 635 M885.5 637.5 L887.5 637.5"/><rect x="904" y="632" width="10.5" height="5.5"/><path d="M909.2 637.5 L909.2 642 M906.5 642.5 L912 642.5 M903 632 L915.5 632"/></g>
<rect x="925.6" y="637.5" width="5.5" height="1.3" fill="#555" />
<rect x="934.6" y="637.8" width="83" height="0.8" fill="#b0b0b0" />
<rect x="959.3" y="633" width="3" height="10" fill="#555" />
<rect x="976" y="635.5" width="0.8" height="4.5" fill="#999" />
<rect x="1020.8" y="637.5" width="7.5" height="1.3" fill="#555" />
<rect x="1023.9" y="634.4" width="1.3" height="7.5" fill="#555" />
<text x="1037.4" y="641.4" font-size="10.5" fill="#5a5a5a" textLength="17.4" lengthAdjust="spacingAndGlyphs" >%65</text>
<g fill="none" stroke="#888" stroke-width="0.9"><rect x="1064.5" y="632.5" width="9.5" height="9.5"/><path d="M1067 635 L1069 637 M1071.5 635 L1069.5 637 M1067 639.5 L1069 637.5 M1071.5 639.5 L1069.5 637.5"/></g>
<rect x="273.5" y="202.5" width="694" height="392" fill="#ffffff" stroke="#d4d4d4" stroke-width="1"/>
<g id="slidecontent">
<text x="283" y="295.7" font-size="24.3" fill="#7b4a3c" textLength="473.5" lengthAdjust="spacingAndGlyphs" font-weight="bold" >Psikolojik Danışmandan Neler Bekleyebilirsiniz?</text>
<text x="279.3" y="336.9" font-size="19.3" fill="#262626" textLength="315.5" lengthAdjust="spacingAndGlyphs" font-weight="bold" >Karar Verme Sürecinde Rehberlik</text>
<text x="279" y="370.4" font-size="18.7" fill="#262626" textLength="484.5" lengthAdjust="spacingAndGlyphs" >Akademik, sosyal ve kişisel kararlarınızda farkındalık</text>
<text x="279" y="393.6" font-size="18.7" fill="#262626" textLength="491.8" lengthAdjust="spacingAndGlyphs" >kazanmanızı ve seçenekleri değerlendirmenizi sağlar.</text>
<text x="278.5" y="426.5" font-size="18.7" fill="#262626" textLength="253.5" lengthAdjust="spacingAndGlyphs" >Sizin yerinize karar vermez;</text>
<text x="538" y="426.5" font-size="19.3" fill="#262626" textLength="213.8" lengthAdjust="spacingAndGlyphs" font-weight="bold" >karar almayı destekler</text>
<text x="750.5" y="426.5" font-size="18.7" fill="#262626" textLength="5" lengthAdjust="spacingAndGlyphs" >.</text>
<text x="279.3" y="459.4" font-size="19.3" fill="#262626" textLength="288.2" lengthAdjust="spacingAndGlyphs" font-weight="bold" >Kendini Tanıma Sürecine Katkı</text>
<text x="279" y="492" font-size="18.7" fill="#262626" textLength="454.7" lengthAdjust="spacingAndGlyphs" >Güçlü yönlerinizi, değerlerinizi, ilgi alanlarınızı ve</text>
<text x="279" y="515.8" font-size="18.7" fill="#262626" textLength="376.7" lengthAdjust="spacingAndGlyphs" >hedeflerinizi keşfetmenize yardımcı olur.</text>
<g><path d="M781 352 C784 336 800 330 822 331 C845 332 862 341 885 338 C905 335 925 326 942 334 C955 341 953 365 951 392 C949 420 953 450 952 482 L778 486 C776 460 782 430 780 405 C778 385 778 365 781 352 Z" fill="#e1e9f6"/><path d="M778 484 C800 480 830 483 860 482 C895 481 925 478 948 484 C958 492 956 512 944 520 C925 528 890 526 860 527 C825 528 795 526 781 516 C771 508 770 492 778 484 Z" fill="#a9d2f2"/><ellipse cx="830" cy="500" rx="28" ry="9.5" fill="#86bdea"/><ellipse cx="895" cy="499" rx="27" ry="10" fill="#86bdea"/><rect x="864.8" y="361.8" width="15.4" height="44" fill="#ffffff" stroke="#b8714d" stroke-width="1.6"/><rect x="884.3" y="361.8" width="8.4" height="28" fill="#ffffff" stroke="#b8714d" stroke-width="1.6"/><rect x="884.3" y="393.8" width="8.4" height="14.5" fill="#ffffff" stroke="#b8714d" stroke-width="1.6"/><rect x="827" y="357.5" width="19" height="2.2" fill="#b8714d"/><rect x="830.5" y="344.5" width="5" height="13" fill="#e8f0ee" stroke="#9fc4bf" stroke-width="0.6"/><rect x="839.5" y="351.5" width="5" height="6" fill="#3d7c72"/><rect x="838" y="375" width="12.5" height="2.2" fill="#b8714d"/><rect x="840" y="371.5" width="9" height="3.5" fill="#3d7c72"/><rect x="800" y="353" width="6" height="15" fill="#f7f4ef"/><rect x="805" y="359" width="5" height="22" fill="#f0ddc0"/><rect x="820" y="430.5" width="89" height="52" fill="#b8764f"/><rect x="823.5" y="435" width="40" height="44" fill="none" stroke="#9a5b3a" stroke-width="1.1"/><rect x="866" y="435" width="40" height="44" fill="none" stroke="#9a5b3a" stroke-width="1.1"/><path d="M852 430.5 L851 418 L858 418 L857 430.5 Z" fill="#d98a6c"/><path d="M853 419 C845 413 845 403 849 397 C853 404 856 412 853 419 Z" fill="#2f6d5c"/><path d="M855 419 C862 410 864 401 859 396 C855 403 853 411 855 419 Z" fill="#3f8c77"/><path d="M788.7 471.8 L798 471.8 L797 495.8 L789.7 495.8 Z" fill="#c9805f"/><path d="M793 472 C783 455 778 428 781 408 C790 425 797 450 793 472 Z" fill="#2d6a5a"/><path d="M794 472 C800 458 805 447 802 434 C796 446 792 460 794 472 Z" fill="#3b8a74"/><path d="M792 472 C786 465 783 458 784 452 C789 458 792 465 792 472 Z" fill="#3b8a74"/><path d="M926.7 467.8 L936 467.8 L935 490.5 L927.7 490.5 Z" fill="#c9805f"/><path d="M931 468 C940 450 945 425 943 402 C935 420 928 446 931 468 Z" fill="#2d6a5a"/><path d="M930 468 C922 457 920 446 922 436 C928 446 931 458 930 468 Z" fill="#3b8a74"/><path d="M800 387 C800 384 802 383.5 805 383.5 L815 383.5 C818 383.5 820 385 820.5 388 L828 450 L849 451 C852 451 852.5 455 851.5 461 L812 461 C809 461 807 459 806.5 456 Z" fill="#f3b01b"/><path d="M809 461 L809 501 M838 461 L834 501 M815 461 L812 496 M848 461 L845 496" stroke="#7c3f2a" stroke-width="1.4"/><path d="M806 430 L842 430 L846 440" stroke="#7c3f2a" stroke-width="1.5" fill="none"/><path d="M817 395 C816 388 822 384 828 386 C836 390 839 405 840 418 L841 433 L820 436 C818 425 817 405 817 395 Z" fill="#3a9a8b"/><path d="M836 395 C840 392 842 388 843 383" stroke="#3a9a8b" stroke-width="3" fill="none" stroke-linecap="round"/><circle cx="843.5" cy="382" r="2" fill="#e9b48f"/><path d="M834 404 L843 398 L845 411 L837 416 Z" fill="#f4f4f4"/><path d="M820 433 L848 436 C854 437 856 444 855 452 L853 490 L846 490 L843 452 L822 450 Z" fill="#1f4d7a"/><path d="M844 490 L853 490 L856 496 L845 496 Z" fill="#111111"/><path d="M836 440 L833 493 L827 493 L823 448 Z" fill="#1f4d7a"/><path d="M826 493 L834 493 L837 499 L825 499 Z" fill="#111111"/><path d="M817 378 C815 367 820 361 827 361 C833 361 835 366 834 370 L826 371 L824 385 C819 385 817 382 817 378 Z" fill="#1b1f2e"/><ellipse cx="829" cy="375" rx="5" ry="6.5" fill="#e9b48f"/><path d="M823 370 C825 364 831 363 834 368 L828 369 Z" fill="#1b1f2e"/><path d="M922.7 387 C922.7 384 921 384 918 384 L905 384 C902 384 900 386 899.5 389 L893 450 L874 451 C871 451 871 455 872 461 L914 461 C917 461 918 459 918.5 456 Z" fill="#f3b01b"/><path d="M875 461 L873 501 M912 461 L914 501 M890 461 L885 497 M905 461 L902 497" stroke="#7c3f2a" stroke-width="1.4"/><path d="M917 430 L881 430 L877 440" stroke="#7c3f2a" stroke-width="1.5" fill="none"/><path d="M911 366 C911 359 907 357 903 358 C899 359 898 364 898.5 372 L899 392 L903 394 L902 378 L910 378 L912 395 L915 394 C914 384 912 374 911 366 Z" fill="#1b1f2e"/><path d="M910 393 L916 395 L916 412 L909 412 Z" fill="#c3d4ea"/><path d="M899 392 L912 392 C913 405 912 420 910 432 C915 440 914 450 905 455 L880 480 C874 476 875 466 880 458 L890 440 C895 425 897 405 899 392 Z" fill="#1f4d7a"/><path d="M901 392 Q906 398 911 392 Z" fill="#c3d4ea"/><ellipse cx="905.8" cy="374.5" rx="5.2" ry="6.2" fill="#e9b48f"/><path d="M899.5 372 C900 365 904 362 908 363 C911 364 912 368 911.5 371 C908 368 904 368 900.5 373 Z" fill="#1b1f2e"/><path d="M906 425 C900 428 894 430 888 430" stroke="#e9b48f" stroke-width="2.5" fill="none"/><path d="M881 478 L878 495 L883 495 L889 474 Z" fill="#e9b48f"/><path d="M877 494 L884 494 L883 500 L875 500 Z" fill="#111111"/><path d="M890 474 L893 494 L898 494 L897 468 Z" fill="#e9b48f"/><path d="M892 493 L899 493 L900 500 L892 500 Z" fill="#111111"/></g>
</g>
<rect x="1083" y="369" width="3" height="40" fill="#8a8a8a" rx="1.5"/>
<defs><clipPath id="vclip"><path d="M1148.8 183 L1148.8 101 Q1148.8 92.7 1157 92.7 L1299 92.7 Q1307.2 92.7 1307.2 101 L1307.2 181.1 L1148.8 181.1 Z"/></clipPath><linearGradient id="wall" x1="0" y1="0" x2="1" y2="0.3"><stop offset="0" stop-color="#cdd0cf"/><stop offset="0.5" stop-color="#dcdedd"/><stop offset="1" stop-color="#d4cfcb"/></linearGradient><filter id="blur1"><feGaussianBlur stdDeviation="1.5"/></filter></defs>
<path d="M1146.8 183.1 L1146.8 100.7 Q1146.8 90.7 1156.8 90.7 L1299.2 90.7 Q1309.2 90.7 1309.2 100.7 L1309.2 183.1 Z" fill="#1ee68f"/>
<g clip-path="url(#vclip)"><rect x="1148" y="92" width="162" height="92" fill="url(#wall)"/><rect x="1214" y="104" width="16" height="11" fill="#8f908e" opacity="0.55" filter="url(#blur1)"/><rect x="1241" y="121" width="8" height="20" fill="#8f908e" opacity="0.5" filter="url(#blur1)"/><path d="M1180 184 C1184 170 1192 162 1200 156 C1196 145 1195 130 1199 122 C1204 113 1214 113 1220 114 C1228 114 1236 120 1237 132 C1238 142 1236 150 1240 156 C1250 162 1256 172 1259 184 Z" fill="#2c2725"/><path d="M1203 136 C1203 124 1210 121 1219 121 C1229 121 1235 126 1235 138 C1235 150 1228 161 1219 161 C1210 161 1203 150 1203 136 Z" fill="#dcc2b4"/><path d="M1208 137 L1215 136.5 M1223 136.5 L1230 137" stroke="#6a5048" stroke-width="1.3"/><path d="M1214 153 Q1219 151 1224 153" stroke="#9a6a5a" stroke-width="1.4" fill="none"/></g>
<rect x="1151" y="160.2" width="120.9" height="19.8" fill="#2a2a2a" rx="5" opacity="0.72"/>
<text x="1153.7" y="175" font-size="13" fill="#ffffff" textLength="115.5" lengthAdjust="spacingAndGlyphs" >Seyma Bilgiz Öztürk</text>
<defs><clipPath id="c2"><rect x="1192.5" y="191.3" width="71" height="71" rx="6"/></clipPath><linearGradient id="bw" x1="0" y1="0" x2="1" y2="1"><stop offset="0" stop-color="#f4f4f4"/><stop offset="1" stop-color="#8a8a8a"/></linearGradient></defs>
<g clip-path="url(#c2)"><rect x="1192.5" y="191.3" width="71" height="71" fill="#e6e6e6"/><rect x="1192.5" y="191.3" width="71" height="71" fill="none" stroke="#f4f4f4" stroke-width="2"/><path d="M1194 196 L1220 202 L1220 205 L1194 200 Z" fill="#1a1a1a"/><rect x="1195" y="210" width="10" height="6" fill="#555"/><rect x="1196" y="226" width="8" height="22" fill="#4a4a4a"/><rect x="1197.5" y="228" width="5" height="18" fill="#7a7a7a"/><rect x="1254" y="227" width="3" height="14" fill="#444"/><path d="M1245 205 C1252 203 1258 208 1258 214" stroke="#9a9a9a" stroke-width="1.5" fill="none"/><path d="M1212 262 C1216 252 1226 246 1240 248 C1250 250 1256 256 1258 262 Z" fill="#cfcfcf"/><path d="M1207 225 C1207 212 1216 206 1226 206 C1238 206 1244 214 1244 226 C1244 240 1236 252 1226 252 C1215 252 1207 240 1207 225 Z" fill="#dadada"/><path d="M1208 230 C1204 214 1212 199 1228 198 C1242 198 1250 208 1247 226 C1246 232 1244 236 1243 236 C1243 226 1240 216 1234 214 C1226 218 1216 216 1210 222 Z" fill="#101010"/><path d="M1214 228 L1221 227 M1229 226 L1236 226" stroke="#222" stroke-width="1.6"/><path d="M1220 243 Q1226 246 1232 242" stroke="#555" stroke-width="1.2" fill="none"/><path d="M1220 240 L1224 236" stroke="#888" stroke-width="1"/></g>
<rect x="1151" y="251" width="156.70000000000005" height="18.5" fill="#2e2e30" rx="4" opacity="0.84"/>
<g><rect x="1157.4" y="253.9" width="6.2" height="10.5" rx="3.1" fill="#f0575c"/><rect x="1159.7" y="263.8" width="1.6" height="2" fill="#f0575c"/><rect x="1157.2" y="265.5" width="6.6" height="1.6" rx="0.8" fill="#f0575c"/><path d="M1153.4 266.90000000000003 L1166.8000000000002 253.5" stroke="#2c2d2f" stroke-width="2.6"/><path d="M1153.4 266.90000000000003 L1166.8000000000002 253.5" stroke="#f0575c" stroke-width="1.3"/></g>
<text x="1171.8" y="265.5" font-size="13" fill="#ffffff" textLength="132" lengthAdjust="spacingAndGlyphs" >Dr. Öğr. Üyesi Mehm...</text>
<rect x="1192.5" y="282" width="71" height="71" rx="6" fill="#ffffff"/>
<circle cx="1228" cy="313" r="26.5" fill="#ffffff" stroke="#3a4a8a" stroke-width="1"/><circle cx="1228" cy="313" r="20.5" fill="none" stroke="#4a568f" stroke-width="4" stroke-dasharray="1.6 1.4" opacity="0.5"/><circle cx="1228" cy="313" r="16.5" fill="none" stroke="#3a4a8a" stroke-width="0.8"/><circle cx="1228" cy="313" r="14.5" fill="#2e3470"/><path d="M1228 314 L1217.0 314.0" stroke="#d9a43a" stroke-width="1.3"/><path d="M1228 314 L1217.6 310.3" stroke="#d9a43a" stroke-width="1.3"/><path d="M1228 314 L1219.5 306.9" stroke="#d9a43a" stroke-width="1.3"/><path d="M1228 314 L1222.5 304.4" stroke="#d9a43a" stroke-width="1.3"/><path d="M1228 314 L1226.0 303.1" stroke="#d9a43a" stroke-width="1.3"/><path d="M1228 314 L1230.0 303.1" stroke="#d9a43a" stroke-width="1.3"/><path d="M1228 314 L1233.5 304.4" stroke="#d9a43a" stroke-width="1.3"/><path d="M1228 314 L1236.5 306.9" stroke="#d9a43a" stroke-width="1.3"/><path d="M1228 314 L1238.4 310.3" stroke="#d9a43a" stroke-width="1.3"/><path d="M1228 314 L1239.0 314.0" stroke="#d9a43a" stroke-width="1.3"/><ellipse cx="1228" cy="317" rx="3.3" ry="6.5" fill="#d9a43a"/><circle cx="1228" cy="307.5" r="2.4" fill="#d9a43a"/>
<text x="1196" y="347" font-size="7" fill="#c0392b" font-weight="bold" >KiD</text>
<rect x="1212" y="344" width="48" height="0.8" fill="#bbbbbb" />
<rect x="1151" y="341" width="156" height="18.30000000000001" fill="#2e2e30" rx="4" opacity="0.84"/>
<g><rect x="1157.4" y="343.90000000000003" width="6.2" height="10.5" rx="3.1" fill="#f0575c"/><rect x="1159.7" y="353.8" width="1.6" height="2" fill="#f0575c"/><rect x="1157.2" y="355.5" width="6.6" height="1.6" rx="0.8" fill="#f0575c"/><path d="M1153.4 356.90000000000003 L1166.8000000000002 343.5" stroke="#2c2d2f" stroke-width="2.6"/><path d="M1153.4 356.90000000000003 L1166.8000000000002 343.5" stroke="#f0575c" stroke-width="1.3"/></g>
<text x="1171.8" y="355.4" font-size="13" fill="#ffffff" textLength="134.8" lengthAdjust="spacingAndGlyphs" >Kurumsal İletişim Dire...</text>
<text x="1169.8" y="412.2" font-size="15" fill="#ffffff" textLength="116.5" lengthAdjust="spacingAndGlyphs" font-weight="bold" >Berat Karadoğan</text>
<rect x="1150.3" y="430.5" width="124.20000000000005" height="19.5" fill="#2e2e30" rx="4" opacity="0.84"/>
<g><rect x="1157.4" y="433.6" width="6.2" height="10.5" rx="3.1" fill="#f0575c"/><rect x="1159.7" y="443.5" width="1.6" height="2" fill="#f0575c"/><rect x="1157.2" y="445.2" width="6.6" height="1.6" rx="0.8" fill="#f0575c"/><path d="M1153.4 446.6 L1166.8000000000002 433.2" stroke="#2c2d2f" stroke-width="2.6"/><path d="M1153.4 446.6 L1166.8000000000002 433.2" stroke="#f0575c" stroke-width="1.3"/></g>
<text x="1171.8" y="445.4" font-size="13" fill="#ffffff" textLength="98.8" lengthAdjust="spacingAndGlyphs" >Berat Karadoğan</text>
<rect x="1192.5" y="461.8" width="71" height="70.5" rx="6" fill="#f2f2f2"/>
<path d="M1203.7 474 C1204 469 1252 469 1252.5 474 L1248 512 L1209.3 512 Z" fill="#000000"/><ellipse cx="1228.3" cy="517" rx="29.6" ry="6.2" fill="#000000"/><path d="M1210 477 C1212 488 1214 500 1214.8 510.5" stroke="#ffffff" stroke-width="1.5" fill="none" stroke-linecap="round"/><path d="M1227 519 C1236 518.5 1245 517 1249.5 514" stroke="#ffffff" stroke-width="1.3" fill="none" stroke-linecap="round"/>
<rect x="1150.3" y="520.4" width="87.90000000000009" height="19.600000000000023" fill="#2e2e30" rx="4" opacity="0.84"/>
<g><rect x="1157.4" y="523.6" width="6.2" height="10.5" rx="3.1" fill="#f0575c"/><rect x="1159.7" y="533.5" width="1.6" height="2" fill="#f0575c"/><rect x="1157.2" y="535.2" width="6.6" height="1.6" rx="0.8" fill="#f0575c"/><path d="M1153.4 536.6 L1166.8000000000002 523.2" stroke="#2c2d2f" stroke-width="2.6"/><path d="M1153.4 536.6 L1166.8000000000002 523.2" stroke="#f0575c" stroke-width="1.3"/></g>
<text x="1171.8" y="535.2" font-size="13" fill="#ffffff" textLength="62.5" lengthAdjust="spacingAndGlyphs" >Yusuf Kaya</text>
<rect x="1192.5" y="551.6" width="71" height="70.5" rx="6" fill="#5632b0"/>
<text x="1214.8" y="600.5" font-size="37" fill="#ffffff" textLength="24.6" lengthAdjust="spacingAndGlyphs" >Y</text>
<rect x="1150.3" y="610" width="91.0" height="19.799999999999955" fill="#2e2e30" rx="4" opacity="0.84"/>
<g><rect x="1157.4" y="613.1" width="6.2" height="10.5" rx="3.1" fill="#f0575c"/><rect x="1159.7" y="623.0" width="1.6" height="2" fill="#f0575c"/><rect x="1157.2" y="624.7" width="6.6" height="1.6" rx="0.8" fill="#f0575c"/><path d="M1153.4 626.1 L1166.8000000000002 612.7" stroke="#2c2d2f" stroke-width="2.6"/><path d="M1153.4 626.1 L1166.8000000000002 612.7" stroke="#f0575c" stroke-width="1.3"/></g>
<text x="1171.8" y="625" font-size="13" fill="#ffffff" textLength="65.6" lengthAdjust="spacingAndGlyphs" >Eren Birhan</text>
<rect x="1191.3" y="632" width="73" height="33" rx="4" fill="#0f1012"/>
<path d="M1222 647 L1228 653 L1234 647" fill="none" stroke="#8a8a9a" stroke-width="1.5" />
<g fill="none" stroke="#ffffff" stroke-width="1.3"><rect x="47.5" y="679.8" width="8" height="15" rx="4"/><path d="M44.5 689.5 Q44.5 698.5 51.5 698.5 Q58.5 698.5 58.5 689.5 M51.5 698.5 L51.5 702 M47.5 702 L55.5 702"/></g>
<path d="M41.8 702.8 L64.2 681" fill="none" stroke="#000000" stroke-width="2.2" />
<path d="M40.8 701.8 L63.2 680" fill="none" stroke="#f0185c" stroke-width="2" />
<path d="M80 692.5 L84.0 689 L88 692.5" fill="none" stroke="#ffffff" stroke-width="1.3" />
<text x="43.5" y="717.5" font-size="12" fill="#ffffff" textLength="17.6" lengthAdjust="spacingAndGlyphs" stroke="#ffffff" stroke-width="0.25">Ses</text>
<g fill="none" stroke="#ffffff" stroke-width="1.3"><rect x="133.5" y="685" width="15" height="12.5" rx="2"/><path d="M148.5 689.5 L156.5 685 L156.5 697.5 L148.5 693"/></g>
<path d="M134.5 702.8 L157.2 681" fill="none" stroke="#000000" stroke-width="2.2" />
<path d="M133.5 701.8 L156.2 680" fill="none" stroke="#f0185c" stroke-width="2" />
<path d="M178 692.5 L182.0 689 L186 692.5" fill="none" stroke="#ffffff" stroke-width="1.3" />
<text x="129.1" y="717.5" font-size="12" fill="#ffffff" textLength="30.599999999999994" lengthAdjust="spacingAndGlyphs" stroke="#ffffff" stroke-width="0.25">Video</text>
<g fill="none" stroke="#ffffff" stroke-width="1.3"><circle cx="405" cy="686.5" r="3.2"/><path d="M401 699 L401 696 Q401 692.5 405 692.5 L406.5 692.5"/><circle cx="412" cy="689.5" r="3.3"/><path d="M406 699.3 L406 697 Q406 694.5 409 694.5 L415 694.5 Q418.5 694.5 418.5 697 L418.5 699.3 Z"/></g>
<text x="425.7" y="693" font-size="11" fill="#d8d8d8" textLength="11.9" lengthAdjust="spacingAndGlyphs" >12</text>
<path d="M459.2 692.5 L462.95 689 L466.7 692.5" fill="none" stroke="#ffffff" stroke-width="1.3" />
<text x="380.2" y="717.5" font-size="12" fill="#ffffff" textLength="58.5" lengthAdjust="spacingAndGlyphs" stroke="#ffffff" stroke-width="0.25">Katılımcılar</text>
<g fill="none" stroke="#ffffff" stroke-width="1.3"><path d="M513 683 Q513 680.5 516 680.5 L527.5 680.5 Q530.5 680.5 530.5 683.5 L530.5 691 Q530.5 693 528.5 693"/><path d="M509 688 Q509 684.5 512.5 684.5 L523 684.5 Q526.5 684.5 526.5 688 L526.5 695 Q526.5 698 523 698 L515 698 L511.5 701.5 L511.5 697.8 Q509 697 509 694.5 Z"/></g><g fill="#ffffff"><circle cx="514" cy="691.3" r="1"/><circle cx="517.8" cy="691.3" r="1"/><circle cx="521.6" cy="691.3" r="1"/></g>
<path d="M549.3 692.5 L553.0999999999999 689 L556.9 692.5" fill="none" stroke="#ffffff" stroke-width="1.3" />
<text x="501.2" y="717.5" font-size="12" fill="#ffffff" textLength="37.900000000000034" lengthAdjust="spacingAndGlyphs" stroke="#ffffff" stroke-width="0.25">Sohbet</text>
<path d="M605 701 L596 692.5 Q592.5 688.5 594.5 684.5 Q597.5 680 602.5 682.5 L605 684.5 L607.5 682.5 Q612.5 680 615.5 684.5 Q617.5 688.5 614 692.5 Z" fill="none" stroke="#ffffff" stroke-width="1.3" />
<path d="M629.3 692.5 L633.0999999999999 689 L636.9 692.5" fill="none" stroke="#ffffff" stroke-width="1.3" />
<text x="581.5" y="717.5" font-size="12" fill="#ffffff" textLength="46.299999999999955" lengthAdjust="spacingAndGlyphs" stroke="#ffffff" stroke-width="0.25">Tepki ver</text>
<rect x="681.8" y="680.9" width="24.3" height="19.7" fill="#19e08c" rx="3"/>
<path d="M693.9 696 L693.9 686.5 M689.8 690.5 L693.9 686 L698 690.5" fill="none" stroke="#000000" stroke-width="2.2" />
<path d="M726.7 692.5 L730.9000000000001 689 L735.1 692.5" fill="none" stroke="#ffffff" stroke-width="1.3" />
<text x="677.2" y="717.5" font-size="12" fill="#ffffff" textLength="32.89999999999998" lengthAdjust="spacingAndGlyphs" stroke="#ffffff" stroke-width="0.25">Paylaş</text>
<path d="M809 682 L817.5 685 L817.5 691 Q817.5 698 809 701 Q800.5 698 800.5 691 L800.5 685 Z" fill="none" stroke="#ffffff" stroke-width="1.4" />
<path d="M809 685 L809 691.5 L815 691.5 Q814.5 695.5 809 698 Z M809 691.5 L803 691.5 L803 686.8 L809 685 Z" fill="#ffffff" />
<text x="751" y="717.5" font-size="12" fill="#ffffff" textLength="116.89999999999998" lengthAdjust="spacingAndGlyphs" stroke="#ffffff" stroke-width="0.25">Oturum sahibi araçları</text>
<g fill="none" stroke="#ffffff" stroke-width="1.4"><circle cx="923.3" cy="685.5" r="3.8"/><circle cx="910.7" cy="696.5" r="3.8"/><path d="M907 690 L907 685 Q907 681.5 910.5 681.5 L915 681.5 M927.5 692 L927.5 697 Q927.5 700.5 924 700.5 L919.5 700.5"/></g>
<path d="M942.8 692.5 L946.75 689 L950.7 692.5" fill="none" stroke="#ffffff" stroke-width="1.3" />
<text x="883.8" y="717.5" font-size="12" fill="#ffffff" textLength="66.90000000000009" lengthAdjust="spacingAndGlyphs" stroke="#ffffff" stroke-width="0.25">Uygulamalar</text>
<g fill="none" stroke="#ffffff" stroke-width="1.4"><rect x="990.5" y="680" width="19" height="22" rx="3"/><path d="M994.5 686 L1000 686 M994.5 691 L1005 691 M994.5 696 L1002 696"/></g>
<path d="M1024.6 692.5 L1029.15 689 L1033.7 692.5" fill="none" stroke="#ffffff" stroke-width="1.3" />
<text x="967.4" y="717.5" font-size="12" fill="#ffffff" textLength="65.39999999999998" lengthAdjust="spacingAndGlyphs" stroke="#ffffff" stroke-width="0.25">Dokümanlar</text>
<circle cx="1083.4" cy="691" r="11.7" fill="none" stroke="#ffffff" stroke-width="1.4"/><g fill="#ffffff"><circle cx="1078" cy="691" r="1.4"/><circle cx="1083.4" cy="691" r="1.4"/><circle cx="1088.8" cy="691" r="1.4"/></g>
<text x="1055" y="717.5" font-size="12" fill="#ffffff" textLength="55.799999999999955" lengthAdjust="spacingAndGlyphs" stroke="#ffffff" stroke-width="0.25">Daha fazla</text>
<path d="M1315 679.3 L1329.8 679.3 L1329.8 698.8 M1323 683.7 L1329.8 680 M1323 683.7 L1323 702.1 L1329.8 698.8" fill="none" stroke="#ff0a5c" stroke-width="1.3" stroke-linejoin="round"/>
<circle cx="1315" cy="684.6" r="3" fill="none" stroke="#ffffff" stroke-width="1.2"/>
<path d="M1313.5 688.3 C1310.5 688.3 1308.3 690.3 1307.6 693 L1308.8 694.4 L1311.3 691.8 L1311.8 696 L1307.6 701.2 L1309.3 702.6 L1313.2 698.3 L1315.6 702.6 L1317.6 702 L1315.8 695.8 L1316.3 692.6 L1318.2 694.6 L1319.4 693.4 L1316.8 689.3 Z" fill="none" stroke="#ffffff" stroke-width="1.2" stroke-linejoin="round"/>
<text x="1306.3" y="717.5" font-size="12" fill="#ffffff" textLength="23.700000000000045" lengthAdjust="spacingAndGlyphs" stroke="#ffffff" stroke-width="0.25">Ayrıl</text>
<path d="M16 741.2 L23 740.2 L23 747.2 L16 747.2 Z M24 740 L32 739 L32 747.2 L24 747.2 Z M16 748.2 L23 748.2 L23 755.2 L16 754.3 Z M24 748.2 L32 748.2 L32 756 L24 755 Z" fill="#ffffff" />
<circle cx="74.5" cy="745.5" r="7.8" fill="none" stroke="#ffffff" stroke-width="1.8"/>
<path d="M68.8 751.5 L62 758.2" fill="none" stroke="#ffffff" stroke-width="2" />
<g fill="none" stroke="#ffffff" stroke-width="1.3"><rect x="112.5" y="744" width="10.5" height="8"/><path d="M111.5 741 L124 741 M111.5 755 L124 755 M127.3 741 L127.3 743 M127.3 745.5 L127.3 755"/></g>
<defs><linearGradient id="edg" x1="0" y1="0" x2="1" y2="0.6"><stop offset="0" stop-color="#2cb6ee"/><stop offset="0.55" stop-color="#2fc6d8"/><stop offset="1" stop-color="#6fe04a"/></linearGradient></defs>
<path d="M155 750 C155 742 160.5 736 167.5 736 C174.5 736 179.2 741.5 179.2 747 C179.2 758 166 762 158 757 C155.5 755 155 752.5 155 750 Z" fill="#1460b8"/><path d="M155 749 C155 741 161 736 167.5 736 C174.5 736 179.2 741 179.2 746.5 C179.2 750.5 176 752.8 172.5 752.8 C169.5 752.8 167.8 751 168.6 748.5 C169.2 745.8 167 744 163.8 744.4 C160 745 156.5 746.8 155 749 Z" fill="url(#edg)"/><circle cx="166.3" cy="748.3" r="2.7" fill="#33294f"/><path d="M167 752.5 C170 755 175 755 177.5 752 C176.5 756 172 759.5 166.5 759.5 Z" fill="#0d4f9c"/><rect x="155" y="751.5" width="12" height="8.5" rx="0.8" fill="#f0a020"/><rect x="155" y="755.5" width="12" height="4.5" fill="#c97a10"/><rect x="160.2" y="755" width="1.6" height="1.6" fill="#ffd83a"/><path d="M159 751.5 L159 750 L163 750 L163 751.5" fill="none" stroke="#5a4020" stroke-width="0.8"/>
<ellipse cx="206" cy="747.4" rx="11.3" ry="11" fill="#e0222b"/><ellipse cx="206" cy="747.4" rx="4.6" ry="8" fill="#33294f"/>
<text x="222.4" y="752.4" font-size="12.5" fill="#ffffff" textLength="33.79999999999998" lengthAdjust="spacingAndGlyphs" >Oper...</text>
<rect x="192.2" y="765.5" width="68.60000000000002" height="2.5" fill="#76b9ed" />
<path d="M281 738 L287 738 L287 747.5 L293.5 747.5 L284 757.8 L274.5 747.5 L281 747.5 Z" fill="#2e8ae6" />
<text x="300.3" y="752.4" font-size="12.5" fill="#ffffff" textLength="35.30000000000001" lengthAdjust="spacingAndGlyphs" >İndiri...</text>
<rect x="269.8" y="765.5" width="69.19999999999999" height="2.5" fill="#76b9ed" />
<g><circle cx="361.8" cy="748" r="12" fill="#db4437"/><path d="M361.8 748 L351.40000000000003 742 A12 12 0 0 0 367.8 758.4 Z" fill="#0f9d58"/><path d="M361.8 748 L367.8 758.4 A12 12 0 0 0 372.2 742 Z" fill="#f4b400"/><circle cx="361.8" cy="748" r="5.2" fill="#ffffff"/><circle cx="361.8" cy="748" r="4.1" fill="#4285f4"/></g>
<text x="378.4" y="752.4" font-size="12.5" fill="#ffffff" textLength="33.900000000000034" lengthAdjust="spacingAndGlyphs" >Chat...</text>
<rect x="347.7" y="765.5" width="69.19999999999999" height="2.5" fill="#76b9ed" />
<g><circle cx="438.6" cy="748" r="12" fill="#db4437"/><path d="M438.6 748 L428.20000000000005 742 A12 12 0 0 0 444.6 758.4 Z" fill="#0f9d58"/><path d="M438.6 748 L444.6 758.4 A12 12 0 0 0 449.0 742 Z" fill="#f4b400"/><circle cx="438.6" cy="748" r="5.2" fill="#ffffff"/><circle cx="438.6" cy="748" r="4.1" fill="#4285f4"/></g>
<text x="455.3" y="752.4" font-size="12.5" fill="#ffffff" textLength="32.80000000000001" lengthAdjust="spacingAndGlyphs" >Micr...</text>
<rect x="425" y="765.5" width="68.69999999999999" height="2.5" fill="#76b9ed" />
<g><circle cx="516" cy="748" r="12" fill="#db4437"/><path d="M516 748 L505.6 742 A12 12 0 0 0 522 758.4 Z" fill="#0f9d58"/><path d="M516 748 L522 758.4 A12 12 0 0 0 526.4 742 Z" fill="#f4b400"/><circle cx="516" cy="748" r="5.2" fill="#ffffff"/><circle cx="516" cy="748" r="4.1" fill="#4285f4"/></g>
<text x="532.2" y="752.4" font-size="12.5" fill="#ffffff" textLength="36.59999999999991" lengthAdjust="spacingAndGlyphs" >Psiko...</text>
<rect x="502" y="765.5" width="68.60000000000002" height="2.5" fill="#76b9ed" />
<g><rect x="591.1" y="739" width="13" height="19" fill="#ffffff"/><path d="M593.1 742 L602.1 742 M593.1 745 L602.1 745 M593.1 748 L602.1 748 M593.1 751 L602.1 751 M593.1 754 L602.1 754" stroke="#2b579a" stroke-width="1"/><path d="M582.1 739.5 L595.1 736.5 L595.1 759.5 L582.1 756.5 Z" fill="#2b579a"/><text x="583.4" y="752" font-size="9.5" font-weight="bold" fill="#ffffff">W</text></g>
<text x="610.3" y="752.4" font-size="12.5" fill="#ffffff" textLength="29.5" lengthAdjust="spacingAndGlyphs" >DER...</text>
<rect x="580.3" y="765.5" width="68.40000000000009" height="2.5" fill="#76b9ed" />
<g><rect x="668.8" y="739" width="13" height="19" fill="#ffffff"/><path d="M670.8 742 L679.8 742 M670.8 745 L679.8 745 M670.8 748 L679.8 748 M670.8 751 L679.8 751 M670.8 754 L679.8 754" stroke="#2b579a" stroke-width="1"/><path d="M659.8 739.5 L672.8 736.5 L672.8 759.5 L659.8 756.5 Z" fill="#2b579a"/><text x="661.0999999999999" y="752" font-size="9.5" font-weight="bold" fill="#ffffff">W</text></g>
<text x="687.2" y="752.4" font-size="12.5" fill="#ffffff" textLength="33.799999999999955" lengthAdjust="spacingAndGlyphs" >akad...</text>
<rect x="657.2" y="765.5" width="68.89999999999998" height="2.5" fill="#76b9ed" />
<rect x="736.9" y="736" width="24" height="24" rx="9" fill="#0b5cff"/><text x="740.1" y="751.5" font-size="11" font-weight="bold" fill="#ffffff" textLength="17.5" lengthAdjust="spacingAndGlyphs">zm</text>
<text x="765" y="752.4" font-size="12.5" fill="#ffffff" textLength="30.299999999999955" lengthAdjust="spacingAndGlyphs" >Zoo...</text>
<rect x="735.1" y="765.5" width="68.69999999999993" height="2.5" fill="#76b9ed" />
<rect x="808.1" y="728" width="75.6" height="40" fill="#5a5275" />
<rect x="813.7" y="736" width="24" height="24" rx="9" fill="#0b5cff"/><text x="816.9000000000001" y="751.5" font-size="11" font-weight="bold" fill="#ffffff" textLength="17.5" lengthAdjust="spacingAndGlyphs">zm</text>
<text x="842" y="752.4" font-size="12.5" fill="#ffffff" textLength="30.200000000000045" lengthAdjust="spacingAndGlyphs" >Zoo...</text>
<rect x="808.1" y="765.5" width="75.60000000000002" height="2.5" fill="#76b9ed" />
<path d="M892.7 750.6 L899 744.8 L905.5 750.6" fill="none" stroke="#ffffff" stroke-width="1.4" />
<circle cx="923" cy="747.5" r="7.8" fill="#ffffff"/><circle cx="923" cy="747.5" r="7.8" fill="none" stroke="#1e2a6a" stroke-width="0.6" stroke-dasharray="0.8 1"/><circle cx="923" cy="747.5" r="5.6" fill="#1e2a6a"/><rect x="920" y="744" width="6" height="7" rx="1.5" fill="#d9b45a"/><rect x="921.5" y="746" width="3" height="3" fill="#1e2a6a"/>
<ellipse cx="947" cy="747.5" rx="7.8" ry="7.6" fill="#c8202f"/><ellipse cx="947" cy="747.5" rx="6.2" ry="5" fill="#ffffff"/><ellipse cx="947" cy="747.5" rx="6.2" ry="2.8" fill="none" stroke="#c8202f" stroke-width="0.7"/><text x="943.2" y="749.2" font-size="4.4" font-weight="bold" fill="#222" textLength="7.6" lengthAdjust="spacingAndGlyphs">SGK</text>
<circle cx="968.5" cy="740.8" r="2.6" fill="#7b83eb"/><circle cx="975.2" cy="743.5" r="2" fill="#7b83eb"/><path d="M963 745 L974 745 L974 755 Q974 757 972 757 L965 757 Q963 757 963 755 Z" fill="#5059c9"/><text x="965.3" y="753.3" font-size="8" font-weight="bold" fill="#ffffff">T</text><circle cx="974.7" cy="753.3" r="4.6" fill="#13a10e"/><path d="M972.4 753.3 L974.2 755 L977 751.8" stroke="#fff" stroke-width="1.1" fill="none"/>
<ellipse cx="994.7" cy="747.5" rx="7" ry="7.6" fill="#c4c4c4"/><path d="M990 742 Q993 744 992 747 Q994 749 993 752 M996 741 Q998 744 997 746 Q1000 748 999 751" stroke="#e4e4e4" stroke-width="1.6" fill="none"/>
<rect x="1011.3" y="739.5" width="16" height="16" fill="#e8731e" rx="1.5"/>
<path d="M1015 750.5 L1024 750.5 M1015.5 753 L1023 753 M1017.5 748.5 L1022 743 M1020 748.5 Q1025 748 1024 751" fill="none" stroke="#ffffff" stroke-width="1" />
<path d="M1043 739.5 L1050.5 742 L1050.5 747.5 Q1050.5 753.5 1043 756.5 Q1035.5 753.5 1035.5 747.5 L1035.5 742 Z" fill="#ffffff" />
<path d="M1043 741.5 L1043 748 L1048.5 748 Q1048 752 1043 754.5 Z M1043 748 L1037.5 748 L1037.5 743.3 Z" fill="#1e1e1e" />
<path d="M1046 757.5 L1050.7 749.5 L1055.4 757.5 Z" fill="#f6c02a" />
<rect x="1050.2" y="752" width="1" height="3" fill="#222" />
<rect x="1050.2" y="755.8" width="1" height="1" fill="#222" />
<rect x="1059.6" y="739.5" width="14.8" height="11" fill="#bfbfbf" />
<rect x="1060.8" y="740.7" width="12.4" height="8.6" fill="#5a5a5a" />
<rect x="1061" y="752.5" width="5" height="3" fill="#bfbfbf" />
<rect x="1068.5" y="752.5" width="5" height="3" fill="#bfbfbf" />
<g fill="none" stroke="#ffffff" stroke-width="1.1"><rect x="1087" y="739.5" width="5.5" height="4"/><rect x="1085.7" y="743.5" width="8.5" height="13" rx="1"/><path d="M1094 754 L1096 756 L1099.5 751.5"/></g>
<path d="M1107.5 745 L1111 745 L1116 740 L1116 755.5 L1111 750.5 L1107.5 750.5 Z" fill="#e55b2e" />
<path d="M1118.5 743.5 Q1121.5 747.7 1118.5 752 M1120 741 Q1125 747.7 1120 754.5" fill="none" stroke="#b0402a" stroke-width="1" />
<g fill="none" stroke="#ffffff" stroke-width="1.1"><rect x="1133.5" y="744" width="8" height="8" rx="2"/><path d="M1141.5 746 L1145 744 L1145 752 L1141.5 750 M1134 740.5 Q1139 739 1144 740.5 M1134 755.5 Q1139 757 1144 755.5"/></g>
<g><rect x="1159.3" y="739" width="6" height="10.5" rx="3" fill="#ffffff"/><path d="M1157.3 746 Q1157.3 752.5 1162.3 752.5 Q1167.3 752.5 1167.3 746 M1162.3 752.5 L1162.3 756 M1159 756.3 L1165.6 756.3" fill="none" stroke="#ffffff" stroke-width="1.1"/></g>
<g fill="none" stroke="#ffffff" stroke-width="1.1"><rect x="1183" y="743.5" width="11" height="9" rx="1"/><path d="M1179 748 L1183 748 M1180 744.5 L1180 746.5 M1182 744.5 L1182 746.5"/></g><rect x="1185" y="745.5" width="7" height="5" fill="#ffffff"/>
<g fill="none" stroke="#ffffff" stroke-width="1.1"><rect x="1207" y="741.5" width="12" height="10"/><path d="M1213 751.5 L1213 755.5 M1209.5 755.5 L1216.5 755.5"/><rect x="1202.8" y="739.5" width="5" height="5"/></g>
<g fill="none" stroke="#ffffff" stroke-width="1.1"><path d="M1226.5 745 L1229.5 745 L1233.5 741.5 L1233.5 754.5 L1229.5 751 L1226.5 751 Z"/><path d="M1236 745 Q1238 748 1236 751 M1238.5 742.5 Q1241.5 748 1238.5 753.5 M1241 740.5 Q1245 748 1241 755.5"/></g>
<text x="1266.6" y="743.4" font-size="12" fill="#ffffff" textLength="26.6" lengthAdjust="spacingAndGlyphs" >14:17</text>
<text x="1253" y="760.4" font-size="12" fill="#ffffff" textLength="53.8" lengthAdjust="spacingAndGlyphs" >25.11.2025</text>
<path d="M1325 740 L1341.5 740 L1341.5 752 L1333 752 L1329 756 L1329 752 L1325 752 Z" fill="#ffffff" />
<rect x="1327.5" y="743" width="11" height="1" fill="#555" />
<rect x="1327.5" y="745.5" width="11" height="1" fill="#555" />
<rect x="1327.5" y="748" width="8" height="1" fill="#555" />
<circle cx="1340.7" cy="755.5" r="8" fill="#2a2a2a" stroke="#7a7a7a" stroke-width="1"/>
<text x="1337.3" y="759.6" font-size="11" fill="#ffffff" >3</text>
<rect x="1360.5" y="728" width="1" height="40" fill="#5a5570" />
<path d="M250.5 382.5 L250.5 395.5 L253.6 392.6 L256 397.2 L258.2 396.2 L255.9 391.8 L260.3 391.8 Z" fill="#ffffff" stroke="#222222" stroke-width="0.9" stroke-linejoin="round"/>
</svg>
</body></html>
